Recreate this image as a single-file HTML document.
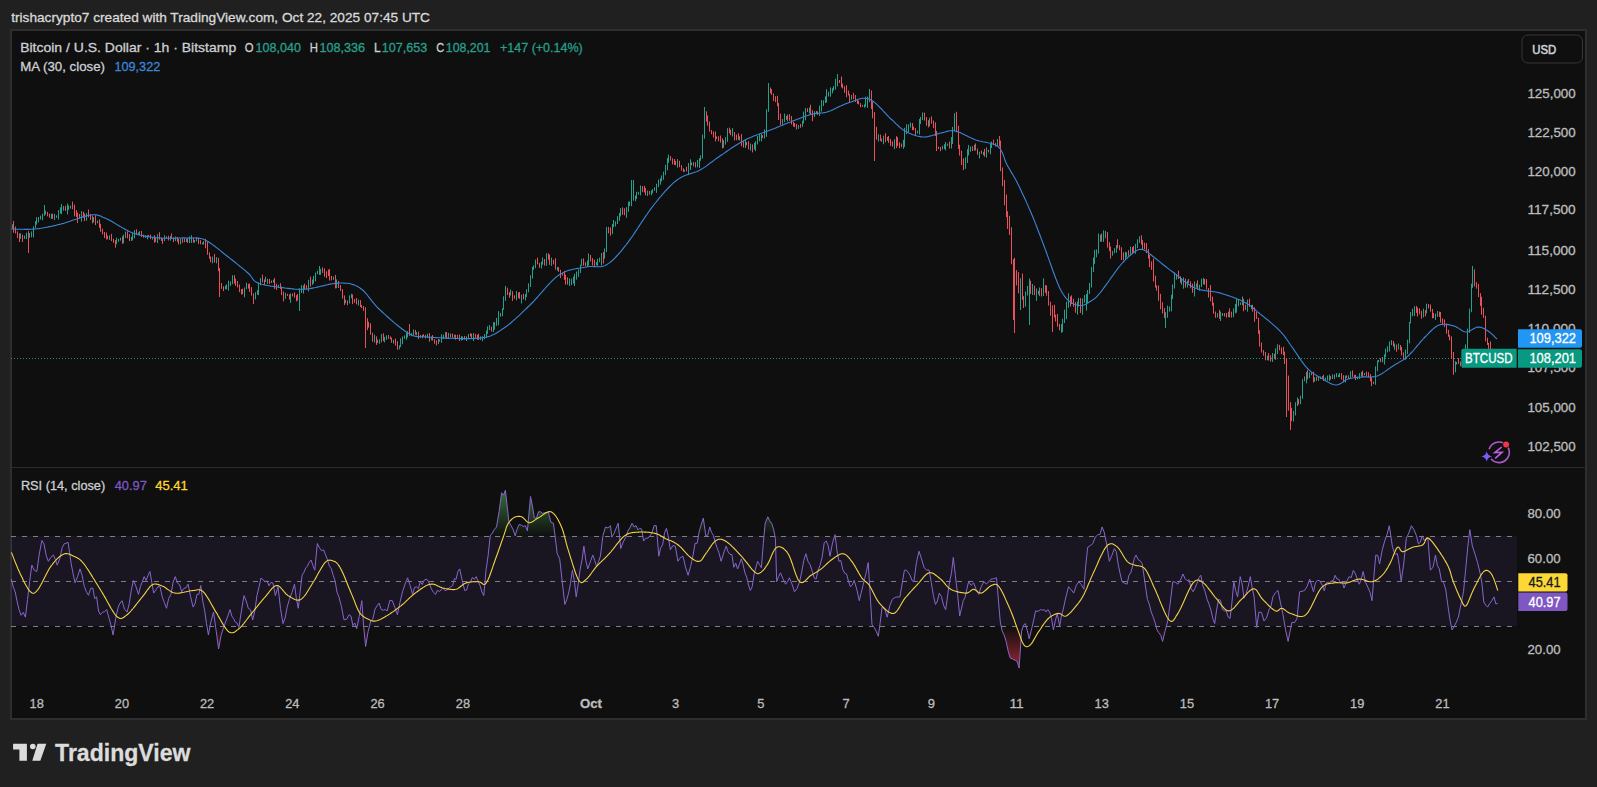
<!DOCTYPE html>
<html><head><meta charset="utf-8"><style>
html,body{margin:0;padding:0;}
body{width:1597px;height:787px;overflow:hidden;background:#202020;position:relative;font-family:"Liberation Sans",sans-serif;}
</style></head><body>
<svg width="1597" height="787" viewBox="0 0 1597 787" style="position:absolute;left:0;top:0"><defs><clipPath id="cp"><rect x="11" y="30" width="1506" height="437"/></clipPath><clipPath id="cr"><rect x="11" y="468" width="1506" height="220"/></clipPath><linearGradient id="gg" gradientUnits="userSpaceOnUse" x1="0" y1="468" x2="0" y2="536.5"><stop offset="0" stop-color="#4caf50" stop-opacity="0.9"/><stop offset="1" stop-color="#4caf50" stop-opacity="0"/></linearGradient><linearGradient id="rg" gradientUnits="userSpaceOnUse" x1="0" y1="626.5" x2="0" y2="694.5"><stop offset="0" stop-color="#f23645" stop-opacity="0"/><stop offset="1" stop-color="#f23645" stop-opacity="1"/></linearGradient></defs><text x="11.2" y="21.9" font-family="Liberation Sans, sans-serif" font-size="13.3" fill="#d9d9d9" stroke="#d9d9d9" stroke-width="0.3" textLength="418.8" lengthAdjust="spacingAndGlyphs">trishacrypto7 created with TradingView.com, Oct 22, 2025 07:45 UTC</text><rect x="10" y="29" width="1577" height="691" fill="#2e2e2e"/><rect x="12" y="31" width="1573" height="687" fill="#0f0f0f"/><rect x="12" y="467" width="1573" height="1" fill="#2b2b2b"/><g clip-path="url(#cp)"><path d="M11,358.5H1517" stroke="#26a08c" stroke-width="1" stroke-dasharray="1,2" opacity="0.9"/><path d="M12.5,224.3V228.7M20.5,233.3V238.8M24.5,235.6V238.7M26.5,232.7V239.1M29.5,233.0V237.9M31.5,231.5V237.3M33.5,226.4V237.4M35.5,221.1V227.9M36.5,217.2V224.6M38.5,217.0V222.4M40.5,215.6V219.5M42.5,213.7V220.2M44.5,205.0V215.9M45.5,210.7V214.5M51.5,213.8V219.0M54.5,214.0V220.0M56.5,215.3V217.7M58.5,210.1V219.5M60.5,207.2V213.5M61.5,204.0V214.2M63.5,206.1V210.6M67.5,203.6V214.4M68.5,205.4V210.0M70.5,205.7V208.6M81.5,211.2V221.7M86.5,213.1V220.7M92.5,215.5V223.3M97.5,220.6V223.3M109.5,235.4V240.0M116.5,237.8V244.2M118.5,238.8V241.9M120.5,237.8V240.6M123.5,234.6V243.4M125.5,231.6V238.0M131.5,236.6V240.8M132.5,232.8V240.4M134.5,230.1V238.4M138.5,232.3V234.6M139.5,231.1V235.4M145.5,235.5V238.0M147.5,235.2V239.3M152.5,237.3V239.3M157.5,234.3V243.1M164.5,235.2V241.2M170.5,236.2V240.6M175.5,236.6V241.1M180.5,238.4V244.3M186.5,238.6V242.1M189.5,236.5V243.1M191.5,235.2V242.8M194.5,240.0V242.6M196.5,237.2V241.5M202.5,242.5V244.4M203.5,241.2V244.5M212.5,256.6V263.3M216.5,257.1V263.3M225.5,285.7V289.2M226.5,284.4V289.4M228.5,280.7V290.6M230.5,281.5V285.9M232.5,275.2V284.2M244.5,287.4V297.3M246.5,282.7V289.1M255.5,292.2V299.4M257.5,290.2V294.2M258.5,282.3V295.2M260.5,278.0V285.3M265.5,276.7V282.0M267.5,278.8V283.8M273.5,279.7V282.6M278.5,284.8V287.8M285.5,292.8V298.9M290.5,293.4V302.9M299.5,288.4V311.0M301.5,285.1V293.0M303.5,285.4V293.6M308.5,279.8V291.5M312.5,279.5V284.9M313.5,275.9V283.6M315.5,272.5V281.4M317.5,270.7V274.2M319.5,266.0V274.9M320.5,268.8V274.8M333.5,276.6V279.9M336.5,279.4V288.2M345.5,299.6V303.3M349.5,295.4V303.5M351.5,293.8V298.2M358.5,299.6V305.6M374.5,334.7V342.5M379.5,339.3V343.8M381.5,334.0V342.4M384.5,336.9V342.4M386.5,335.3V339.9M393.5,339.8V343.6M399.5,345.3V349.3M400.5,338.4V347.0M402.5,336.5V344.2M404.5,335.5V338.7M406.5,332.6V339.8M407.5,331.2V337.5M411.5,332.9V336.3M413.5,329.6V335.5M416.5,332.0V335.2M422.5,335.0V338.4M427.5,333.7V338.0M431.5,336.6V340.3M438.5,339.0V344.1M441.5,334.2V342.8M443.5,334.7V339.0M445.5,332.2V337.5M448.5,332.9V338.9M455.5,334.6V339.8M461.5,336.2V340.6M462.5,336.4V340.1M466.5,336.3V341.0M468.5,334.0V338.5M473.5,333.2V341.0M480.5,336.4V340.0M482.5,336.2V341.2M484.5,334.1V339.2M486.5,330.5V338.0M487.5,326.3V333.8M489.5,325.2V330.0M493.5,322.2V332.0M494.5,322.2V329.6M496.5,317.9V325.9M498.5,311.1V325.3M500.5,312.9V316.7M502.5,308.3V316.3M503.5,296.3V309.8M505.5,285.9V300.9M510.5,289.6V295.5M516.5,291.1V300.4M521.5,294.7V303.4M525.5,294.1V300.5M526.5,289.3V297.0M528.5,283.4V292.3M530.5,275.3V287.0M532.5,266.8V278.6M533.5,265.5V269.8M535.5,259.6V268.2M541.5,261.8V268.5M542.5,257.5V264.7M546.5,253.3V265.8M551.5,257.6V265.9M557.5,267.1V270.5M569.5,278.4V286.1M571.5,278.7V285.2M573.5,276.6V283.6M574.5,273.8V286.0M576.5,271.5V279.6M578.5,269.5V276.9M580.5,264.7V273.1M581.5,258.8V265.8M587.5,260.4V267.0M588.5,253.5V265.4M596.5,262.0V265.4M597.5,258.8V265.9M599.5,257.6V262.1M601.5,253.0V265.5M604.5,248.5V258.7M606.5,227.1V252.1M612.5,224.0V234.1M613.5,220.0V227.1M615.5,221.3V226.5M617.5,216.2V224.1M619.5,212.9V220.9M620.5,208.1V216.5M626.5,207.2V217.8M628.5,201.6V211.8M629.5,201.6V206.0M631.5,180.0V206.1M633.5,180.0V200.7M635.5,195.5V201.2M636.5,191.7V199.0M638.5,191.8V194.3M640.5,185.5V195.4M647.5,190.6V196.0M651.5,190.3V195.3M652.5,189.3V193.3M654.5,187.3V190.8M656.5,183.8V192.9M658.5,179.6V187.1M660.5,178.3V184.8M661.5,175.4V181.4M663.5,171.6V179.8M665.5,164.9V175.2M667.5,158.0V170.4M668.5,154.6V162.8M677.5,159.1V167.6M684.5,169.6V171.4M688.5,163.0V174.8M690.5,159.3V169.9M693.5,162.1V166.4M697.5,159.9V167.3M699.5,158.1V168.0M700.5,155.3V160.8M702.5,134.5V158.6M704.5,107.0V138.8M723.5,140.2V147.8M725.5,137.2V144.6M727.5,128.2V141.9M732.5,128.1V136.5M739.5,136.3V140.5M745.5,139.2V148.0M750.5,143.6V150.6M754.5,142.8V149.6M755.5,141.2V151.2M757.5,136.0V144.4M759.5,134.2V141.4M761.5,134.0V141.4M764.5,129.4V138.5M766.5,109.2V136.9M768.5,83.0V111.8M782.5,119.0V124.7M784.5,113.6V122.2M787.5,114.5V121.4M798.5,125.1V128.9M802.5,120.7V126.8M803.5,111.6V123.4M805.5,108.1V120.3M809.5,107.5V113.4M814.5,111.3V117.1M819.5,105.6V116.0M821.5,100.0V111.6M823.5,100.3V106.1M825.5,96.3V103.1M826.5,89.2V102.4M828.5,91.7V96.5M830.5,87.4V96.7M832.5,88.2V93.3M833.5,86.1V90.6M835.5,78.8V89.6M837.5,74.0V86.4M851.5,95.0V99.8M864.5,104.3V107.7M865.5,96.7V106.7M867.5,96.5V107.9M869.5,88.9V102.2M878.5,134.3V141.6M883.5,135.7V144.2M894.5,139.2V149.2M903.5,139.8V148.8M904.5,127.8V146.9M906.5,124.3V134.1M908.5,124.2V132.4M910.5,122.6V127.5M917.5,130.6V133.4M919.5,118.9V134.5M920.5,116.9V124.1M922.5,112.4V120.0M929.5,117.8V126.3M942.5,145.8V149.4M944.5,144.2V149.1M945.5,142.0V150.4M947.5,143.5V145.8M951.5,137.1V148.4M952.5,127.0V144.0M954.5,113.2V131.1M965.5,157.3V168.9M967.5,149.2V163.0M968.5,145.1V155.4M970.5,146.5V151.8M974.5,144.8V150.7M979.5,151.6V158.4M983.5,151.8V155.3M986.5,147.3V157.7M990.5,143.8V154.3M991.5,141.5V148.0M997.5,139.0V146.0M1020.5,278.2V310.0M1025.5,291.5V306.6M1027.5,285.9V295.5M1029.5,278.5V325.0M1032.5,284.0V295.0M1036.5,288.5V300.9M1039.5,287.5V296.2M1043.5,278.4V296.0M1061.5,324.1V332.8M1062.5,318.8V332.0M1064.5,309.6V323.0M1066.5,301.6V319.2M1068.5,293.3V307.8M1077.5,301.4V314.6M1078.5,297.9V306.5M1082.5,298.5V314.8M1084.5,295.1V302.7M1086.5,294.0V310.6M1087.5,290.1V303.3M1089.5,283.0V294.0M1091.5,267.1V287.5M1093.5,257.7V272.0M1094.5,249.8V263.9M1096.5,249.5V257.3M1098.5,233.5V253.6M1100.5,234.7V241.7M1103.5,230.3V241.9M1105.5,230.9V238.3M1112.5,251.1V255.7M1114.5,248.3V253.3M1116.5,245.0V252.7M1125.5,251.8V259.6M1126.5,252.2V257.3M1130.5,246.7V255.1M1135.5,243.9V253.8M1137.5,239.3V248.2M1139.5,236.3V242.8M1165.5,312.1V328.0M1167.5,305.6V317.8M1169.5,306.5V311.6M1171.5,294.8V311.4M1172.5,284.5V299.0M1174.5,272.4V288.5M1176.5,274.0V279.6M1181.5,278.2V284.8M1183.5,277.4V288.7M1187.5,280.7V287.6M1194.5,281.5V296.5M1196.5,283.5V287.6M1199.5,284.8V290.7M1201.5,278.8V287.1M1203.5,277.9V284.5M1217.5,313.2V317.5M1220.5,311.6V321.0M1222.5,313.0V316.0M1228.5,311.7V317.1M1233.5,308.5V317.2M1235.5,303.9V313.4M1236.5,298.9V312.6M1238.5,300.0V306.4M1240.5,302.4V304.9M1242.5,296.5V305.4M1247.5,299.6V311.7M1251.5,305.0V309.1M1267.5,355.6V360.3M1272.5,353.0V362.0M1275.5,348.4V359.9M1277.5,344.3V354.1M1293.5,410.9V421.5M1295.5,402.3V415.5M1297.5,397.5V406.0M1300.5,395.6V404.2M1302.5,379.2V398.7M1304.5,376.4V381.2M1306.5,371.9V383.4M1309.5,372.3V378.2M1311.5,372.6V375.2M1314.5,377.2V381.7M1318.5,376.3V380.9M1320.5,376.5V379.1M1322.5,376.1V378.8M1325.5,377.6V380.8M1327.5,375.5V380.5M1329.5,374.6V380.9M1332.5,374.5V379.1M1334.5,374.3V379.2M1336.5,373.0V377.3M1338.5,374.5V377.2M1339.5,373.0V377.1M1345.5,375.6V382.5M1348.5,375.3V378.8M1350.5,371.2V378.3M1357.5,376.7V379.4M1359.5,373.2V379.0M1361.5,372.0V376.5M1364.5,373.0V375.3M1375.5,366.4V384.8M1377.5,360.4V371.3M1378.5,359.9V362.2M1382.5,357.0V362.4M1384.5,354.4V364.5M1385.5,348.6V357.3M1387.5,346.3V352.2M1389.5,341.3V351.5M1391.5,340.1V345.1M1394.5,343.5V349.8M1398.5,343.5V349.5M1405.5,349.5V359.8M1407.5,339.7V354.1M1409.5,322.0V343.3M1410.5,312.1V323.4M1412.5,308.7V316.3M1414.5,306.3V316.0M1423.5,308.6V317.4M1426.5,303.7V313.4M1435.5,313.6V319.9M1437.5,311.0V316.8M1455.5,361.2V372.3M1456.5,362.0V364.5M1462.5,360.0V367.7M1464.5,351.3V366.7M1465.5,344.4V358.9M1467.5,328.6V350.8M1469.5,308.6V332.8M1471.5,283.7V312.2M1472.5,266.0V287.8M1497.5,355.3V364.6" stroke="#26a08c" stroke-width="1" fill="none"/><path d="M13.5,220.9V232.8M15.5,226.5V233.5M17.5,231.4V238.0M19.5,233.4V242.0M22.5,234.6V242.0M28.5,231.1V253.0M47.5,211.9V216.3M49.5,213.6V217.8M52.5,213.7V218.8M65.5,205.8V210.9M72.5,201.6V209.2M74.5,204.7V216.4M76.5,210.2V217.0M77.5,212.6V223.0M79.5,213.9V218.6M83.5,211.6V217.7M84.5,213.6V221.1M88.5,209.6V217.3M90.5,213.9V219.9M93.5,217.0V222.4M95.5,215.3V225.1M99.5,219.4V227.9M100.5,223.8V231.8M102.5,228.7V234.3M104.5,231.9V238.1M106.5,232.5V239.5M107.5,235.7V239.2M111.5,233.8V241.1M113.5,238.8V242.8M115.5,240.1V247.7M122.5,236.3V243.7M127.5,231.3V238.4M129.5,234.1V241.1M136.5,229.3V234.7M141.5,230.9V236.9M143.5,234.6V237.6M148.5,235.0V236.9M150.5,234.5V239.1M154.5,235.1V242.7M155.5,237.8V241.9M159.5,232.2V239.6M161.5,237.7V241.0M162.5,238.8V243.9M166.5,236.4V238.4M168.5,235.7V240.5M171.5,233.4V238.7M173.5,237.4V242.1M177.5,237.0V241.8M178.5,238.9V244.4M182.5,238.4V242.8M184.5,238.4V242.2M187.5,238.3V242.9M193.5,237.7V242.6M198.5,237.6V243.9M200.5,240.2V244.3M205.5,238.8V248.3M207.5,241.8V254.7M209.5,252.4V258.7M210.5,256.5V262.2M214.5,253.9V262.6M218.5,257.8V271.2M219.5,268.0V297.0M221.5,283.0V288.9M223.5,286.3V291.1M234.5,275.2V283.6M235.5,278.7V285.8M237.5,281.0V287.4M239.5,284.5V292.2M241.5,289.1V294.5M242.5,288.8V294.2M248.5,283.9V288.6M249.5,283.5V291.9M251.5,287.1V295.6M253.5,293.4V304.0M262.5,274.6V282.3M264.5,279.4V284.9M269.5,278.8V283.9M271.5,280.6V283.0M274.5,278.0V288.9M276.5,283.7V289.9M280.5,283.2V288.9M281.5,286.6V295.1M283.5,291.5V301.4M287.5,293.9V295.7M289.5,294.4V299.5M292.5,293.5V296.4M294.5,292.3V297.7M296.5,295.2V301.4M297.5,294.0V300.6M304.5,283.7V289.0M306.5,285.2V289.5M310.5,276.6V286.6M322.5,267.4V272.9M324.5,268.4V276.8M326.5,271.2V278.1M328.5,269.6V276.0M329.5,269.2V280.5M331.5,276.0V280.4M335.5,274.9V288.4M338.5,280.8V288.0M340.5,285.1V290.9M342.5,289.3V298.7M344.5,295.4V305.0M347.5,300.5V305.3M352.5,294.4V304.1M354.5,298.9V302.6M356.5,298.0V304.4M360.5,300.1V306.9M361.5,305.0V308.1M363.5,306.0V310.8M365.5,307.4V348.0M367.5,318.2V330.1M368.5,321.8V327.6M370.5,323.3V334.7M372.5,332.7V341.7M376.5,336.3V344.9M377.5,339.6V343.1M383.5,333.3V341.1M388.5,335.0V338.9M390.5,336.4V339.3M391.5,337.6V342.7M395.5,338.6V345.6M397.5,341.2V349.8M409.5,324.0V335.8M415.5,329.9V334.8M418.5,331.6V339.1M420.5,334.8V337.8M423.5,334.1V336.4M425.5,334.8V338.5M429.5,333.1V341.7M432.5,335.1V340.6M434.5,339.1V343.7M436.5,340.4V345.4M439.5,339.5V341.5M446.5,332.0V339.1M450.5,333.6V337.5M452.5,333.5V337.8M454.5,334.8V337.4M457.5,334.8V339.0M459.5,334.5V341.1M464.5,335.9V339.7M470.5,333.3V336.4M471.5,333.7V339.1M475.5,333.9V337.8M477.5,334.7V339.8M478.5,333.7V339.9M491.5,326.6V331.5M507.5,287.7V295.0M509.5,292.2V297.8M512.5,291.2V300.9M514.5,295.3V298.7M518.5,292.4V298.2M519.5,292.0V298.8M523.5,293.7V299.4M537.5,257.6V264.4M539.5,263.0V267.8M544.5,259.0V265.7M548.5,253.3V259.7M549.5,254.5V264.9M553.5,259.8V264.4M555.5,258.2V269.6M558.5,267.1V271.8M560.5,269.8V278.1M562.5,273.0V275.6M564.5,270.8V279.8M565.5,274.7V284.6M567.5,277.3V284.6M583.5,258.4V265.7M585.5,262.2V266.1M590.5,254.9V261.5M592.5,258.1V265.5M594.5,259.7V266.7M603.5,252.1V263.5M608.5,226.9V233.4M610.5,227.5V235.8M622.5,207.4V214.8M624.5,208.3V215.1M642.5,186.0V192.1M644.5,185.8V192.5M645.5,188.0V195.3M649.5,190.9V194.6M670.5,156.1V160.5M672.5,158.3V164.4M674.5,159.0V164.9M675.5,160.9V165.2M679.5,160.8V167.2M681.5,165.2V170.7M683.5,168.3V172.2M686.5,166.8V171.3M691.5,162.4V165.2M695.5,162.2V167.5M706.5,111.3V121.8M707.5,115.5V125.7M709.5,121.5V131.6M711.5,130.0V134.3M713.5,131.4V137.5M715.5,131.5V141.5M716.5,136.4V139.1M718.5,136.3V141.3M720.5,135.5V142.6M722.5,138.3V148.4M729.5,127.6V133.3M730.5,129.6V135.2M734.5,132.0V140.5M736.5,134.6V140.3M738.5,133.2V140.0M741.5,134.0V146.2M743.5,141.2V147.6M746.5,142.1V145.3M748.5,141.2V149.4M752.5,144.3V152.4M762.5,135.2V138.0M770.5,87.5V93.3M771.5,89.1V94.9M773.5,93.5V101.1M775.5,96.2V102.0M777.5,95.8V106.2M778.5,103.1V120.0M780.5,113.8V125.1M786.5,115.8V119.8M789.5,114.1V120.9M791.5,116.0V124.5M793.5,121.8V126.6M794.5,123.1V127.1M796.5,123.8V129.5M800.5,123.9V127.8M807.5,108.2V112.0M810.5,104.7V114.4M812.5,110.2V121.2M816.5,110.9V114.2M817.5,111.5V114.9M839.5,80.0V83.0M841.5,76.5V87.4M842.5,83.6V88.5M844.5,86.3V92.8M846.5,85.2V97.3M848.5,90.6V95.4M849.5,93.9V103.0M853.5,92.9V99.2M855.5,95.0V102.0M857.5,99.9V103.9M858.5,100.7V104.5M860.5,103.2V107.3M862.5,105.0V106.6M871.5,90.5V109.1M872.5,101.4V118.3M874.5,112.1V161.0M876.5,126.8V139.7M880.5,134.6V140.8M881.5,138.6V141.9M885.5,133.2V142.3M887.5,136.9V140.8M888.5,136.0V142.9M890.5,138.9V145.9M892.5,141.4V146.7M896.5,136.1V148.1M897.5,137.2V146.0M899.5,142.2V148.2M901.5,143.5V147.3M912.5,123.0V130.2M913.5,126.6V130.0M915.5,128.1V135.5M924.5,112.6V120.6M926.5,117.1V125.7M928.5,120.2V127.4M931.5,116.5V123.7M933.5,120.5V128.2M935.5,122.4V136.0M936.5,131.0V151.1M938.5,146.7V149.1M940.5,146.9V151.2M949.5,141.5V148.5M956.5,111.8V132.3M958.5,125.7V148.8M959.5,144.7V155.6M961.5,150.6V165.0M963.5,158.4V170.0M972.5,146.3V150.8M975.5,143.5V150.5M977.5,148.6V154.7M981.5,150.5V153.9M984.5,148.9V156.6M988.5,149.8V152.4M993.5,139.7V144.4M995.5,143.1V146.5M999.5,135.9V146.4M1000.5,140.5V171.2M1002.5,167.4V186.2M1004.5,179.9V205.3M1006.5,194.5V217.2M1007.5,211.2V228.9M1009.5,215.8V235.0M1011.5,227.2V264.3M1013.5,259.2V320.0M1014.5,257.8V333.0M1016.5,270.1V285.5M1018.5,272.1V293.3M1022.5,273.5V299.8M1023.5,296.2V308.0M1030.5,280.7V293.9M1034.5,285.7V295.2M1038.5,290.8V294.4M1041.5,288.1V296.5M1045.5,285.1V292.8M1046.5,285.4V295.7M1048.5,291.0V305.6M1050.5,301.7V315.7M1052.5,305.4V332.0M1054.5,304.7V317.5M1055.5,314.7V321.5M1057.5,314.0V326.7M1059.5,323.8V330.4M1070.5,296.5V306.6M1071.5,295.3V304.1M1073.5,298.8V306.8M1075.5,302.1V312.8M1080.5,298.1V312.9M1101.5,233.6V241.7M1107.5,232.0V247.6M1109.5,242.2V251.2M1110.5,246.5V258.7M1117.5,239.2V248.4M1119.5,245.1V250.3M1121.5,247.2V260.0M1123.5,252.4V260.2M1128.5,250.2V255.7M1132.5,247.2V254.2M1133.5,246.0V252.0M1141.5,235.3V244.6M1142.5,240.1V249.1M1144.5,242.7V249.3M1146.5,243.1V253.1M1148.5,249.0V258.5M1149.5,254.9V267.1M1151.5,261.3V269.9M1153.5,258.6V281.5M1155.5,275.6V287.6M1156.5,285.4V290.7M1158.5,285.5V300.8M1160.5,293.8V309.2M1162.5,302.2V313.6M1164.5,308.1V318.1M1178.5,270.6V279.0M1180.5,276.2V282.7M1185.5,278.6V287.6M1188.5,279.0V283.0M1190.5,281.3V288.3M1192.5,283.7V292.8M1197.5,280.3V289.5M1204.5,278.9V284.6M1206.5,279.1V289.5M1208.5,288.1V297.6M1210.5,285.1V301.4M1212.5,296.6V305.8M1213.5,302.7V313.7M1215.5,311.6V317.8M1219.5,309.9V318.8M1224.5,313.1V316.5M1226.5,312.9V317.6M1229.5,308.4V317.5M1231.5,311.6V317.5M1243.5,298.8V311.3M1245.5,304.7V309.9M1249.5,298.6V306.9M1252.5,304.8V311.7M1254.5,307.3V321.8M1256.5,312.0V319.0M1258.5,317.6V333.8M1259.5,330.3V346.6M1261.5,342.5V352.6M1263.5,350.1V355.7M1265.5,352.0V360.3M1268.5,353.1V360.5M1270.5,355.3V361.6M1274.5,353.7V358.5M1279.5,344.9V350.3M1281.5,347.4V354.2M1283.5,346.8V355.1M1284.5,351.6V364.0M1286.5,358.4V417.0M1288.5,375.6V410.7M1290.5,402.1V430.0M1291.5,407.8V421.1M1298.5,399.1V404.5M1307.5,370.2V379.4M1313.5,371.7V382.5M1316.5,376.6V380.8M1323.5,374.8V381.0M1330.5,376.1V379.6M1341.5,373.1V379.6M1343.5,375.2V382.3M1346.5,375.4V378.0M1352.5,370.4V376.9M1354.5,374.9V377.7M1355.5,374.8V380.0M1362.5,370.6V377.2M1366.5,371.7V376.1M1368.5,372.2V377.6M1370.5,374.1V381.3M1371.5,377.6V386.2M1373.5,381.6V383.9M1380.5,358.2V361.8M1393.5,341.1V346.7M1396.5,344.5V351.7M1400.5,345.0V350.4M1401.5,347.0V355.4M1403.5,352.4V359.4M1416.5,305.9V312.9M1417.5,307.6V316.6M1419.5,308.4V314.4M1421.5,310.7V318.8M1425.5,310.2V316.4M1428.5,304.1V308.4M1430.5,304.5V311.7M1432.5,308.9V318.4M1433.5,313.0V318.0M1439.5,311.6V316.9M1440.5,312.0V322.7M1442.5,318.4V325.2M1444.5,319.4V327.1M1446.5,323.6V333.8M1448.5,329.8V336.7M1449.5,334.8V340.3M1451.5,336.3V358.4M1453.5,352.0V374.8M1458.5,358.1V364.1M1460.5,361.4V366.2M1474.5,269.4V286.5M1476.5,282.2V288.6M1478.5,283.9V297.1M1480.5,293.2V305.9M1481.5,296.8V314.8M1483.5,307.8V317.9M1485.5,315.7V341.4M1487.5,337.8V344.9M1488.5,342.9V349.7M1490.5,341.5V352.4M1492.5,348.6V353.2M1494.5,350.4V357.4M1496.5,355.7V360.8" stroke="#e8505c" stroke-width="1" fill="none"/><path d="M12.0,226.3h1V227.3h-1zM20.0,237.5h1V238.5h-1zM24.0,237.7h1V238.7h-1zM26.0,234.2h1V237.7h-1zM29.0,235.2h1V236.6h-1zM31.0,233.5h1V235.2h-1zM33.0,227.1h1V233.5h-1zM35.0,222.5h1V227.1h-1zM36.0,220.0h1V222.5h-1zM38.0,217.9h1V220.0h-1zM40.0,217.0h1V218.0h-1zM42.0,214.3h1V217.0h-1zM44.0,213.8h1V214.8h-1zM45.0,212.9h1V213.9h-1zM51.0,215.0h1V216.1h-1zM54.0,216.5h1V217.9h-1zM56.0,216.4h1V217.4h-1zM58.0,212.2h1V216.4h-1zM60.0,209.0h1V212.2h-1zM61.0,207.7h1V209.0h-1zM63.0,207.6h1V208.6h-1zM67.0,208.5h1V209.5h-1zM68.0,206.8h1V208.5h-1zM70.0,206.4h1V207.4h-1zM81.0,214.5h1V217.8h-1zM86.0,214.6h1V218.9h-1zM92.0,217.8h1V218.8h-1zM97.0,221.7h1V222.7h-1zM109.0,236.3h1V237.5h-1zM116.0,240.8h1V243.0h-1zM118.0,239.3h1V240.8h-1zM120.0,238.8h1V239.8h-1zM123.0,236.3h1V241.7h-1zM125.0,234.4h1V236.3h-1zM131.0,239.8h1V240.8h-1zM132.0,234.7h1V239.8h-1zM134.0,230.9h1V234.7h-1zM138.0,233.6h1V234.6h-1zM139.0,232.8h1V233.8h-1zM145.0,236.3h1V237.3h-1zM147.0,236.0h1V237.0h-1zM152.0,238.5h1V239.5h-1zM157.0,236.2h1V238.8h-1zM164.0,236.9h1V240.2h-1zM170.0,237.0h1V239.4h-1zM175.0,238.3h1V240.5h-1zM180.0,240.1h1V241.2h-1zM186.0,240.0h1V241.0h-1zM189.0,239.6h1V241.2h-1zM191.0,239.1h1V240.1h-1zM194.0,240.8h1V241.8h-1zM196.0,239.6h1V240.8h-1zM202.0,243.0h1V244.0h-1zM203.0,242.1h1V243.1h-1zM212.0,258.6h1V261.4h-1zM216.0,258.6h1V261.8h-1zM225.0,287.3h1V288.3h-1zM226.0,286.6h1V287.6h-1zM228.0,284.3h1V286.6h-1zM230.0,282.1h1V284.3h-1zM232.0,278.1h1V282.1h-1zM244.0,287.9h1V292.5h-1zM246.0,285.6h1V287.9h-1zM255.0,293.6h1V296.3h-1zM257.0,293.6h1V294.6h-1zM258.0,283.2h1V293.6h-1zM260.0,279.1h1V283.2h-1zM265.0,281.1h1V282.1h-1zM267.0,279.4h1V281.1h-1zM273.0,280.3h1V281.6h-1zM278.0,285.7h1V286.7h-1zM285.0,294.7h1V298.1h-1zM290.0,294.0h1V297.5h-1zM299.0,291.7h1V297.9h-1zM301.0,289.4h1V291.7h-1zM303.0,287.1h1V289.4h-1zM308.0,281.0h1V288.3h-1zM312.0,280.3h1V284.1h-1zM313.0,280.0h1V281.0h-1zM315.0,273.6h1V280.0h-1zM317.0,271.8h1V273.6h-1zM319.0,271.2h1V272.2h-1zM320.0,270.3h1V271.3h-1zM333.0,277.5h1V279.0h-1zM336.0,282.4h1V284.9h-1zM345.0,301.7h1V302.7h-1zM349.0,297.1h1V301.7h-1zM351.0,296.6h1V297.6h-1zM358.0,301.9h1V302.9h-1zM374.0,337.1h1V339.3h-1zM379.0,340.4h1V341.5h-1zM381.0,336.3h1V340.4h-1zM384.0,338.3h1V339.3h-1zM386.0,336.8h1V338.3h-1zM393.0,340.6h1V342.0h-1zM399.0,346.0h1V347.1h-1zM400.0,341.5h1V346.0h-1zM402.0,337.1h1V341.5h-1zM404.0,336.8h1V337.8h-1zM406.0,334.8h1V336.8h-1zM407.0,333.0h1V334.8h-1zM411.0,333.7h1V334.7h-1zM413.0,331.3h1V333.7h-1zM416.0,332.9h1V333.9h-1zM422.0,335.5h1V336.6h-1zM427.0,336.6h1V337.6h-1zM431.0,338.3h1V339.3h-1zM438.0,340.3h1V342.9h-1zM441.0,336.8h1V340.8h-1zM443.0,335.8h1V336.8h-1zM445.0,333.8h1V335.8h-1zM448.0,335.4h1V337.0h-1zM455.0,335.6h1V336.6h-1zM461.0,337.7h1V338.9h-1zM462.0,337.7h1V338.7h-1zM466.0,337.2h1V338.3h-1zM468.0,335.2h1V337.2h-1zM473.0,335.2h1V337.6h-1zM480.0,338.6h1V339.6h-1zM482.0,338.1h1V339.1h-1zM484.0,336.3h1V338.1h-1zM486.0,332.6h1V336.3h-1zM487.0,329.3h1V332.6h-1zM489.0,328.1h1V329.3h-1zM493.0,326.4h1V329.2h-1zM494.0,323.4h1V326.4h-1zM496.0,320.9h1V323.4h-1zM498.0,315.6h1V320.9h-1zM500.0,313.8h1V315.6h-1zM502.0,309.1h1V313.8h-1zM503.0,298.9h1V309.1h-1zM505.0,289.1h1V298.9h-1zM510.0,292.4h1V294.1h-1zM516.0,294.0h1V297.4h-1zM521.0,296.0h1V297.8h-1zM525.0,296.2h1V297.2h-1zM526.0,291.5h1V296.2h-1zM528.0,284.9h1V291.5h-1zM530.0,276.8h1V284.9h-1zM532.0,268.2h1V276.8h-1zM533.0,267.1h1V268.2h-1zM535.0,261.3h1V267.1h-1zM541.0,263.0h1V265.9h-1zM542.0,260.6h1V263.0h-1zM546.0,257.4h1V263.6h-1zM551.0,260.5h1V262.4h-1zM557.0,268.5h1V269.5h-1zM569.0,281.0h1V282.0h-1zM571.0,280.1h1V281.1h-1zM573.0,278.0h1V280.1h-1zM574.0,277.5h1V278.5h-1zM576.0,275.9h1V277.5h-1zM578.0,271.5h1V275.9h-1zM580.0,265.3h1V271.5h-1zM581.0,260.0h1V265.3h-1zM587.0,264.7h1V265.7h-1zM588.0,257.9h1V264.7h-1zM596.0,263.3h1V264.8h-1zM597.0,261.1h1V263.3h-1zM599.0,260.8h1V261.8h-1zM601.0,255.4h1V260.8h-1zM604.0,251.3h1V258.0h-1zM606.0,228.0h1V251.3h-1zM612.0,226.1h1V231.9h-1zM613.0,223.9h1V226.1h-1zM615.0,222.4h1V223.9h-1zM617.0,219.0h1V222.4h-1zM619.0,214.2h1V219.0h-1zM620.0,209.5h1V214.2h-1zM626.0,209.7h1V214.4h-1zM628.0,203.0h1V209.7h-1zM629.0,203.0h1V204.0h-1zM631.0,199.4h1V203.0h-1zM633.0,199.1h1V200.1h-1zM635.0,197.9h1V199.1h-1zM636.0,193.8h1V197.9h-1zM638.0,193.6h1V194.6h-1zM640.0,188.4h1V193.6h-1zM647.0,192.0h1V193.0h-1zM651.0,191.9h1V192.9h-1zM652.0,189.8h1V191.9h-1zM654.0,188.0h1V189.8h-1zM656.0,185.0h1V188.0h-1zM658.0,181.2h1V185.0h-1zM660.0,180.3h1V181.3h-1zM661.0,177.3h1V180.3h-1zM663.0,172.7h1V177.3h-1zM665.0,166.3h1V172.7h-1zM667.0,161.5h1V166.3h-1zM668.0,157.6h1V161.5h-1zM677.0,163.6h1V164.6h-1zM684.0,170.3h1V171.3h-1zM688.0,167.3h1V170.7h-1zM690.0,163.2h1V167.3h-1zM693.0,162.9h1V164.4h-1zM697.0,163.7h1V165.7h-1zM699.0,159.5h1V163.7h-1zM700.0,155.9h1V159.5h-1zM702.0,137.2h1V155.9h-1zM704.0,112.0h1V137.2h-1zM723.0,142.6h1V145.1h-1zM725.0,139.1h1V142.6h-1zM727.0,131.4h1V139.1h-1zM732.0,133.6h1V134.6h-1zM739.0,138.2h1V139.2h-1zM745.0,143.2h1V145.0h-1zM750.0,146.5h1V148.9h-1zM754.0,146.9h1V148.1h-1zM755.0,143.2h1V146.9h-1zM757.0,137.9h1V143.2h-1zM759.0,136.8h1V137.9h-1zM761.0,136.2h1V137.2h-1zM764.0,133.3h1V136.8h-1zM766.0,110.7h1V133.3h-1zM768.0,90.3h1V110.7h-1zM782.0,121.3h1V122.6h-1zM784.0,116.8h1V121.3h-1zM787.0,116.3h1V118.1h-1zM798.0,125.9h1V127.3h-1zM802.0,121.6h1V126.3h-1zM803.0,118.0h1V121.6h-1zM805.0,110.1h1V118.0h-1zM809.0,108.4h1V110.8h-1zM814.0,111.8h1V116.0h-1zM819.0,109.9h1V114.0h-1zM821.0,105.2h1V109.9h-1zM823.0,101.4h1V105.2h-1zM825.0,98.5h1V101.4h-1zM826.0,93.4h1V98.5h-1zM828.0,92.4h1V93.4h-1zM830.0,91.0h1V92.4h-1zM832.0,89.7h1V91.0h-1zM833.0,87.7h1V89.7h-1zM835.0,85.3h1V87.7h-1zM837.0,80.5h1V85.3h-1zM851.0,96.2h1V97.8h-1zM864.0,105.1h1V106.1h-1zM865.0,102.2h1V105.1h-1zM867.0,98.0h1V102.2h-1zM869.0,92.7h1V98.0h-1zM878.0,136.1h1V138.5h-1zM883.0,136.9h1V140.5h-1zM894.0,142.1h1V143.6h-1zM903.0,140.4h1V146.5h-1zM904.0,133.6h1V140.4h-1zM906.0,130.7h1V133.6h-1zM908.0,126.4h1V130.7h-1zM910.0,123.9h1V126.4h-1zM917.0,131.2h1V132.8h-1zM919.0,121.0h1V131.2h-1zM920.0,118.5h1V121.0h-1zM922.0,114.4h1V118.5h-1zM929.0,119.3h1V125.2h-1zM942.0,146.5h1V148.1h-1zM944.0,145.6h1V146.6h-1zM945.0,145.3h1V146.3h-1zM947.0,144.5h1V145.5h-1zM951.0,139.0h1V146.4h-1zM952.0,129.4h1V139.0h-1zM954.0,114.7h1V129.4h-1zM965.0,159.5h1V164.7h-1zM967.0,152.9h1V159.5h-1zM968.0,150.5h1V152.9h-1zM970.0,150.0h1V151.0h-1zM974.0,145.8h1V150.1h-1zM979.0,152.2h1V153.2h-1zM983.0,152.9h1V153.9h-1zM986.0,150.7h1V155.8h-1zM990.0,147.1h1V150.7h-1zM991.0,143.3h1V147.1h-1zM997.0,140.7h1V144.7h-1zM1020.0,283.6h1V285.1h-1zM1025.0,294.7h1V303.1h-1zM1027.0,288.0h1V294.7h-1zM1029.0,283.5h1V288.0h-1zM1032.0,291.6h1V293.1h-1zM1036.0,292.1h1V293.1h-1zM1039.0,290.1h1V293.2h-1zM1043.0,287.8h1V293.1h-1zM1061.0,325.6h1V328.4h-1zM1062.0,320.0h1V325.6h-1zM1064.0,314.3h1V320.0h-1zM1066.0,304.9h1V314.3h-1zM1068.0,298.8h1V304.9h-1zM1077.0,302.7h1V309.7h-1zM1078.0,302.1h1V303.1h-1zM1082.0,300.7h1V312.2h-1zM1084.0,299.6h1V300.7h-1zM1086.0,296.8h1V299.6h-1zM1087.0,292.4h1V296.8h-1zM1089.0,284.2h1V292.4h-1zM1091.0,270.2h1V284.2h-1zM1093.0,261.4h1V270.2h-1zM1094.0,255.4h1V261.4h-1zM1096.0,251.8h1V255.4h-1zM1098.0,239.0h1V251.8h-1zM1100.0,236.8h1V239.0h-1zM1103.0,234.8h1V237.7h-1zM1105.0,232.8h1V234.8h-1zM1112.0,252.7h1V254.6h-1zM1114.0,249.0h1V252.7h-1zM1116.0,245.9h1V249.0h-1zM1125.0,254.9h1V258.3h-1zM1126.0,253.1h1V254.9h-1zM1130.0,248.7h1V253.2h-1zM1135.0,245.2h1V251.5h-1zM1137.0,241.7h1V245.2h-1zM1139.0,237.7h1V241.7h-1zM1165.0,315.1h1V316.2h-1zM1167.0,310.5h1V315.1h-1zM1169.0,309.7h1V310.7h-1zM1171.0,298.5h1V309.7h-1zM1172.0,287.2h1V298.5h-1zM1174.0,277.3h1V287.2h-1zM1176.0,275.5h1V277.3h-1zM1181.0,281.6h1V282.6h-1zM1183.0,281.0h1V282.0h-1zM1187.0,282.3h1V285.5h-1zM1194.0,286.6h1V289.9h-1zM1196.0,284.4h1V286.6h-1zM1199.0,286.6h1V287.6h-1zM1201.0,281.4h1V286.6h-1zM1203.0,280.2h1V281.4h-1zM1217.0,314.8h1V316.2h-1zM1220.0,315.4h1V317.7h-1zM1222.0,313.9h1V315.4h-1zM1228.0,313.1h1V314.9h-1zM1233.0,311.2h1V315.9h-1zM1235.0,309.1h1V311.2h-1zM1236.0,304.7h1V309.1h-1zM1238.0,303.6h1V304.7h-1zM1240.0,302.9h1V303.9h-1zM1242.0,301.3h1V302.9h-1zM1247.0,305.0h1V307.5h-1zM1251.0,305.6h1V306.6h-1zM1267.0,356.8h1V359.3h-1zM1272.0,354.2h1V359.7h-1zM1275.0,350.2h1V357.3h-1zM1277.0,347.2h1V350.2h-1zM1293.0,412.9h1V420.6h-1zM1295.0,403.4h1V412.9h-1zM1297.0,400.9h1V403.4h-1zM1300.0,397.4h1V402.7h-1zM1302.0,380.5h1V397.4h-1zM1304.0,379.5h1V380.5h-1zM1306.0,372.9h1V379.5h-1zM1309.0,374.2h1V377.0h-1zM1311.0,373.7h1V374.7h-1zM1314.0,378.8h1V379.8h-1zM1318.0,378.0h1V379.0h-1zM1320.0,377.2h1V378.2h-1zM1322.0,377.1h1V378.1h-1zM1325.0,378.5h1V379.5h-1zM1327.0,378.3h1V379.3h-1zM1329.0,377.5h1V378.5h-1zM1332.0,377.4h1V378.4h-1zM1334.0,375.6h1V377.4h-1zM1336.0,375.5h1V376.5h-1zM1338.0,375.4h1V376.4h-1zM1339.0,374.3h1V375.4h-1zM1345.0,376.4h1V379.5h-1zM1348.0,376.3h1V377.4h-1zM1350.0,372.2h1V376.3h-1zM1357.0,377.5h1V378.5h-1zM1359.0,375.9h1V377.5h-1zM1361.0,372.5h1V375.9h-1zM1364.0,373.6h1V374.6h-1zM1375.0,367.5h1V382.7h-1zM1377.0,360.9h1V367.5h-1zM1378.0,360.6h1V361.6h-1zM1382.0,360.2h1V361.2h-1zM1384.0,355.2h1V360.2h-1zM1385.0,350.6h1V355.2h-1zM1387.0,349.9h1V350.9h-1zM1389.0,344.1h1V349.9h-1zM1391.0,341.7h1V344.1h-1zM1394.0,345.2h1V346.2h-1zM1398.0,347.1h1V348.4h-1zM1405.0,350.4h1V358.2h-1zM1407.0,341.1h1V350.4h-1zM1409.0,322.6h1V341.1h-1zM1410.0,315.0h1V322.6h-1zM1412.0,311.1h1V315.0h-1zM1414.0,308.2h1V311.1h-1zM1423.0,311.1h1V315.4h-1zM1426.0,305.6h1V311.6h-1zM1435.0,315.3h1V317.1h-1zM1437.0,312.4h1V315.3h-1zM1455.0,362.7h1V370.4h-1zM1456.0,362.6h1V363.6h-1zM1462.0,361.8h1V364.1h-1zM1464.0,354.8h1V361.8h-1zM1465.0,346.9h1V354.8h-1zM1467.0,331.0h1V346.9h-1zM1469.0,309.8h1V331.0h-1zM1471.0,285.1h1V309.8h-1zM1472.0,272.9h1V285.1h-1zM1497.0,358.3h1V360.2h-1z" fill="#26a08c"/><path d="M13.0,226.3h1V228.5h-1zM15.0,228.5h1V233.0h-1zM17.0,233.0h1V234.8h-1zM19.0,234.8h1V237.7h-1zM22.0,237.5h1V238.5h-1zM28.0,234.2h1V236.6h-1zM47.0,212.9h1V214.6h-1zM49.0,214.6h1V216.1h-1zM52.0,215.0h1V217.9h-1zM65.0,207.6h1V208.8h-1zM72.0,206.4h1V208.5h-1zM74.0,208.5h1V214.2h-1zM76.0,214.2h1V215.2h-1zM77.0,214.2h1V217.0h-1zM79.0,217.0h1V218.0h-1zM83.0,214.5h1V215.7h-1zM84.0,215.7h1V218.9h-1zM88.0,214.6h1V216.2h-1zM90.0,216.2h1V217.9h-1zM93.0,217.8h1V220.9h-1zM95.0,220.9h1V222.7h-1zM99.0,221.7h1V226.5h-1zM100.0,226.5h1V229.7h-1zM102.0,229.7h1V232.8h-1zM104.0,232.8h1V236.2h-1zM106.0,236.2h1V237.2h-1zM107.0,236.8h1V237.8h-1zM111.0,236.3h1V240.4h-1zM113.0,240.4h1V241.4h-1zM115.0,241.2h1V243.0h-1zM122.0,238.8h1V241.7h-1zM127.0,234.4h1V236.6h-1zM129.0,236.6h1V239.9h-1zM136.0,230.9h1V233.9h-1zM141.0,232.8h1V235.5h-1zM143.0,235.5h1V237.0h-1zM148.0,236.0h1V237.0h-1zM150.0,236.4h1V238.6h-1zM154.0,238.5h1V239.5h-1zM155.0,238.6h1V239.6h-1zM159.0,236.2h1V238.9h-1zM161.0,238.9h1V240.1h-1zM162.0,240.1h1V241.1h-1zM166.0,236.9h1V237.9h-1zM168.0,237.1h1V239.4h-1zM171.0,237.0h1V238.1h-1zM173.0,238.1h1V240.5h-1zM177.0,238.3h1V241.1h-1zM178.0,241.1h1V242.1h-1zM182.0,240.1h1V241.1h-1zM184.0,240.2h1V241.2h-1zM187.0,240.0h1V241.2h-1zM193.0,239.1h1V241.1h-1zM198.0,239.6h1V241.6h-1zM200.0,241.6h1V243.5h-1zM205.0,242.1h1V244.4h-1zM207.0,244.4h1V252.9h-1zM209.0,252.9h1V258.1h-1zM210.0,258.1h1V261.4h-1zM214.0,258.6h1V261.8h-1zM218.0,258.6h1V270.4h-1zM219.0,270.4h1V285.0h-1zM221.0,285.0h1V287.2h-1zM223.0,287.2h1V288.2h-1zM234.0,278.1h1V280.5h-1zM235.0,280.5h1V284.4h-1zM237.0,284.4h1V286.7h-1zM239.0,286.7h1V291.0h-1zM241.0,291.0h1V292.3h-1zM242.0,292.3h1V293.3h-1zM248.0,285.6h1V287.2h-1zM249.0,287.2h1V290.2h-1zM251.0,290.2h1V294.9h-1zM253.0,294.9h1V296.3h-1zM262.0,279.1h1V280.6h-1zM264.0,280.6h1V281.6h-1zM269.0,279.4h1V281.2h-1zM271.0,281.2h1V282.2h-1zM274.0,280.3h1V285.5h-1zM276.0,285.5h1V286.5h-1zM280.0,285.7h1V287.7h-1zM281.0,287.7h1V292.3h-1zM283.0,292.3h1V298.1h-1zM287.0,294.7h1V295.7h-1zM289.0,295.0h1V297.5h-1zM292.0,294.0h1V295.0h-1zM294.0,294.1h1V296.0h-1zM296.0,296.0h1V297.0h-1zM297.0,296.6h1V297.9h-1zM304.0,287.1h1V288.1h-1zM306.0,287.2h1V288.3h-1zM310.0,281.0h1V284.1h-1zM322.0,270.3h1V271.3h-1zM324.0,271.3h1V273.5h-1zM326.0,273.5h1V274.5h-1zM328.0,273.8h1V274.8h-1zM329.0,273.9h1V277.6h-1zM331.0,277.6h1V279.0h-1zM335.0,277.5h1V284.9h-1zM338.0,282.4h1V286.3h-1zM340.0,286.3h1V289.8h-1zM342.0,289.8h1V296.8h-1zM344.0,296.8h1V302.6h-1zM347.0,301.7h1V302.7h-1zM352.0,296.6h1V301.4h-1zM354.0,301.4h1V302.4h-1zM356.0,301.7h1V302.7h-1zM360.0,301.9h1V306.0h-1zM361.0,306.0h1V307.0h-1zM363.0,307.0h1V309.2h-1zM365.0,309.2h1V319.1h-1zM367.0,319.1h1V324.5h-1zM368.0,324.5h1V327.0h-1zM370.0,327.0h1V334.1h-1zM372.0,334.1h1V339.3h-1zM376.0,337.1h1V340.4h-1zM377.0,340.4h1V341.5h-1zM383.0,336.3h1V339.2h-1zM388.0,336.8h1V337.8h-1zM390.0,337.4h1V338.4h-1zM391.0,338.4h1V342.0h-1zM395.0,340.6h1V344.0h-1zM397.0,344.0h1V347.1h-1zM409.0,333.0h1V334.0h-1zM415.0,331.3h1V333.5h-1zM418.0,332.9h1V335.8h-1zM420.0,335.8h1V336.8h-1zM423.0,335.5h1V336.5h-1zM425.0,335.8h1V337.1h-1zM429.0,336.6h1V338.9h-1zM432.0,338.3h1V339.8h-1zM434.0,339.8h1V341.6h-1zM436.0,341.6h1V342.9h-1zM439.0,340.3h1V341.3h-1zM446.0,333.8h1V337.0h-1zM450.0,335.4h1V336.4h-1zM452.0,336.1h1V337.1h-1zM454.0,336.2h1V337.2h-1zM457.0,335.6h1V336.6h-1zM459.0,336.3h1V338.9h-1zM464.0,337.7h1V338.7h-1zM470.0,335.2h1V336.2h-1zM471.0,335.2h1V337.6h-1zM475.0,335.2h1V336.2h-1zM477.0,335.5h1V338.0h-1zM478.0,338.0h1V339.1h-1zM491.0,328.1h1V329.2h-1zM507.0,289.1h1V293.3h-1zM509.0,293.3h1V294.3h-1zM512.0,292.4h1V296.8h-1zM514.0,296.8h1V297.8h-1zM518.0,294.0h1V295.0h-1zM519.0,295.0h1V297.8h-1zM523.0,296.0h1V297.0h-1zM537.0,261.3h1V263.8h-1zM539.0,263.8h1V265.9h-1zM544.0,260.6h1V263.6h-1zM548.0,257.4h1V258.4h-1zM549.0,257.9h1V262.4h-1zM553.0,260.5h1V263.6h-1zM555.0,263.6h1V268.7h-1zM558.0,268.5h1V270.6h-1zM560.0,270.6h1V274.2h-1zM562.0,274.2h1V275.2h-1zM564.0,274.2h1V277.3h-1zM565.0,277.3h1V280.5h-1zM567.0,280.5h1V281.9h-1zM583.0,260.0h1V265.0h-1zM585.0,265.0h1V266.0h-1zM590.0,257.9h1V260.5h-1zM592.0,260.5h1V261.7h-1zM594.0,261.7h1V264.8h-1zM603.0,255.4h1V258.0h-1zM608.0,228.0h1V230.1h-1zM610.0,230.1h1V231.9h-1zM622.0,209.5h1V214.2h-1zM624.0,214.2h1V215.2h-1zM642.0,188.4h1V189.4h-1zM644.0,188.6h1V190.5h-1zM645.0,190.5h1V193.0h-1zM649.0,192.0h1V193.0h-1zM670.0,157.6h1V159.8h-1zM672.0,159.8h1V161.4h-1zM674.0,161.4h1V163.4h-1zM675.0,163.4h1V164.5h-1zM679.0,163.6h1V166.4h-1zM681.0,166.4h1V169.7h-1zM683.0,169.7h1V170.7h-1zM686.0,170.3h1V171.3h-1zM691.0,163.2h1V164.4h-1zM695.0,162.9h1V165.7h-1zM706.0,112.0h1V116.1h-1zM707.0,116.1h1V124.9h-1zM709.0,124.9h1V130.9h-1zM711.0,130.9h1V133.1h-1zM713.0,133.1h1V134.1h-1zM715.0,134.0h1V137.6h-1zM716.0,137.6h1V138.6h-1zM718.0,138.5h1V139.5h-1zM720.0,138.8h1V141.0h-1zM722.0,141.0h1V145.1h-1zM729.0,131.4h1V132.4h-1zM730.0,131.6h1V134.0h-1zM734.0,133.6h1V136.4h-1zM736.0,136.4h1V137.4h-1zM738.0,137.4h1V139.0h-1zM741.0,138.2h1V143.9h-1zM743.0,143.9h1V145.0h-1zM746.0,143.2h1V144.2h-1zM748.0,143.3h1V148.9h-1zM752.0,146.5h1V148.1h-1zM762.0,136.2h1V137.2h-1zM770.0,90.3h1V91.3h-1zM771.0,90.9h1V94.1h-1zM773.0,94.1h1V97.3h-1zM775.0,97.3h1V99.4h-1zM777.0,99.4h1V103.8h-1zM778.0,103.8h1V118.1h-1zM780.0,118.1h1V122.6h-1zM786.0,116.8h1V118.1h-1zM789.0,116.3h1V118.5h-1zM791.0,118.5h1V122.6h-1zM793.0,122.6h1V125.6h-1zM794.0,125.6h1V126.6h-1zM796.0,126.6h1V127.6h-1zM800.0,125.9h1V126.9h-1zM807.0,110.1h1V111.1h-1zM810.0,108.4h1V112.8h-1zM812.0,112.8h1V116.0h-1zM816.0,111.8h1V112.8h-1zM817.0,112.5h1V114.0h-1zM839.0,80.5h1V81.5h-1zM841.0,80.6h1V84.4h-1zM842.0,84.4h1V87.5h-1zM844.0,87.5h1V89.2h-1zM846.0,89.2h1V92.1h-1zM848.0,92.1h1V94.5h-1zM849.0,94.5h1V97.8h-1zM853.0,96.2h1V97.2h-1zM855.0,96.9h1V100.4h-1zM857.0,100.4h1V102.4h-1zM858.0,102.4h1V103.8h-1zM860.0,103.8h1V105.7h-1zM862.0,105.7h1V106.7h-1zM871.0,92.7h1V106.6h-1zM872.0,106.6h1V114.5h-1zM874.0,114.5h1V129.6h-1zM876.0,129.6h1V138.5h-1zM880.0,136.1h1V139.3h-1zM881.0,139.3h1V140.5h-1zM885.0,136.9h1V137.9h-1zM887.0,137.6h1V138.6h-1zM888.0,137.6h1V140.7h-1zM890.0,140.7h1V143.4h-1zM892.0,143.4h1V144.4h-1zM896.0,142.1h1V143.1h-1zM897.0,142.9h1V143.9h-1zM899.0,143.6h1V146.1h-1zM901.0,146.1h1V147.1h-1zM912.0,123.9h1V127.5h-1zM913.0,127.5h1V129.4h-1zM915.0,129.4h1V132.8h-1zM924.0,114.4h1V119.5h-1zM926.0,119.5h1V121.1h-1zM928.0,121.1h1V125.2h-1zM931.0,119.3h1V121.3h-1zM933.0,121.3h1V126.0h-1zM935.0,126.0h1V132.8h-1zM936.0,132.8h1V147.5h-1zM938.0,147.5h1V148.5h-1zM940.0,147.7h1V148.7h-1zM949.0,144.5h1V146.4h-1zM956.0,114.7h1V129.3h-1zM958.0,129.3h1V148.2h-1zM959.0,148.2h1V154.1h-1zM961.0,154.1h1V161.0h-1zM963.0,161.0h1V164.7h-1zM972.0,150.0h1V151.0h-1zM975.0,145.8h1V149.6h-1zM977.0,149.6h1V153.1h-1zM981.0,152.2h1V153.2h-1zM984.0,152.9h1V155.8h-1zM988.0,150.7h1V151.7h-1zM993.0,143.3h1V144.3h-1zM995.0,143.8h1V144.8h-1zM999.0,140.7h1V143.1h-1zM1000.0,143.1h1V168.0h-1zM1002.0,168.0h1V183.9h-1zM1004.0,183.9h1V197.9h-1zM1006.0,197.9h1V214.3h-1zM1007.0,214.3h1V224.3h-1zM1009.0,224.3h1V228.4h-1zM1011.0,228.4h1V259.9h-1zM1013.0,259.9h1V269.6h-1zM1014.0,269.6h1V273.8h-1zM1016.0,273.8h1V276.0h-1zM1018.0,276.0h1V285.1h-1zM1022.0,283.6h1V296.7h-1zM1023.0,296.7h1V303.1h-1zM1030.0,283.5h1V293.1h-1zM1034.0,291.6h1V292.6h-1zM1038.0,292.1h1V293.2h-1zM1041.0,290.1h1V293.1h-1zM1045.0,287.8h1V290.2h-1zM1046.0,290.2h1V294.6h-1zM1048.0,294.6h1V304.1h-1zM1050.0,304.1h1V309.8h-1zM1052.0,309.8h1V310.8h-1zM1054.0,309.8h1V315.7h-1zM1055.0,315.7h1V316.7h-1zM1057.0,316.6h1V325.8h-1zM1059.0,325.8h1V328.4h-1zM1070.0,298.8h1V300.4h-1zM1071.0,300.4h1V302.5h-1zM1073.0,302.5h1V303.6h-1zM1075.0,303.6h1V309.7h-1zM1080.0,302.1h1V312.2h-1zM1101.0,236.8h1V237.8h-1zM1107.0,232.8h1V242.9h-1zM1109.0,242.9h1V247.8h-1zM1110.0,247.8h1V254.6h-1zM1117.0,245.9h1V247.8h-1zM1119.0,247.8h1V248.8h-1zM1121.0,248.7h1V254.7h-1zM1123.0,254.7h1V258.3h-1zM1128.0,253.1h1V254.1h-1zM1132.0,248.7h1V249.7h-1zM1133.0,249.1h1V251.5h-1zM1141.0,237.7h1V243.1h-1zM1142.0,243.1h1V244.8h-1zM1144.0,244.8h1V248.3h-1zM1146.0,248.3h1V250.2h-1zM1148.0,250.2h1V258.0h-1zM1149.0,258.0h1V265.5h-1zM1151.0,265.5h1V267.4h-1zM1153.0,267.4h1V279.0h-1zM1155.0,279.0h1V286.8h-1zM1156.0,286.8h1V288.0h-1zM1158.0,288.0h1V297.8h-1zM1160.0,297.8h1V304.0h-1zM1162.0,304.0h1V310.5h-1zM1164.0,310.5h1V316.2h-1zM1178.0,275.5h1V277.9h-1zM1180.0,277.9h1V282.1h-1zM1185.0,281.0h1V285.5h-1zM1188.0,282.3h1V283.3h-1zM1190.0,282.3h1V286.4h-1zM1192.0,286.4h1V289.9h-1zM1197.0,284.4h1V286.7h-1zM1204.0,280.2h1V282.7h-1zM1206.0,282.7h1V288.9h-1zM1208.0,288.9h1V293.6h-1zM1210.0,293.6h1V299.3h-1zM1212.0,299.3h1V304.2h-1zM1213.0,304.2h1V312.2h-1zM1215.0,312.2h1V316.2h-1zM1219.0,314.8h1V317.7h-1zM1224.0,313.9h1V314.9h-1zM1226.0,313.9h1V314.9h-1zM1229.0,313.1h1V314.1h-1zM1231.0,314.0h1V315.9h-1zM1243.0,301.3h1V306.1h-1zM1245.0,306.1h1V307.5h-1zM1249.0,305.0h1V306.2h-1zM1252.0,305.6h1V309.5h-1zM1254.0,309.5h1V316.7h-1zM1256.0,316.7h1V318.1h-1zM1258.0,318.1h1V331.8h-1zM1259.0,331.8h1V344.9h-1zM1261.0,344.9h1V351.7h-1zM1263.0,351.7h1V354.8h-1zM1265.0,354.8h1V359.3h-1zM1268.0,356.8h1V357.8h-1zM1270.0,356.9h1V359.7h-1zM1274.0,354.2h1V357.3h-1zM1279.0,347.2h1V348.6h-1zM1281.0,348.6h1V352.5h-1zM1283.0,352.5h1V353.5h-1zM1284.0,352.7h1V361.8h-1zM1286.0,361.8h1V381.7h-1zM1288.0,381.7h1V404.7h-1zM1290.0,404.7h1V410.6h-1zM1291.0,410.6h1V420.6h-1zM1298.0,400.9h1V402.7h-1zM1307.0,372.9h1V377.0h-1zM1313.0,373.7h1V378.9h-1zM1316.0,378.8h1V379.8h-1zM1323.0,377.1h1V378.7h-1zM1330.0,377.5h1V378.5h-1zM1341.0,374.3h1V378.4h-1zM1343.0,378.4h1V379.5h-1zM1346.0,376.4h1V377.4h-1zM1352.0,372.2h1V376.1h-1zM1354.0,376.1h1V377.1h-1zM1355.0,376.4h1V377.7h-1zM1362.0,372.5h1V374.3h-1zM1366.0,373.6h1V374.6h-1zM1368.0,373.9h1V376.8h-1zM1370.0,376.8h1V379.0h-1zM1371.0,379.0h1V382.1h-1zM1373.0,382.1h1V383.1h-1zM1380.0,360.6h1V361.6h-1zM1393.0,341.7h1V345.5h-1zM1396.0,345.2h1V348.4h-1zM1400.0,347.1h1V349.5h-1zM1401.0,349.5h1V354.1h-1zM1403.0,354.1h1V358.2h-1zM1416.0,308.2h1V310.1h-1zM1417.0,310.1h1V312.6h-1zM1419.0,312.6h1V313.6h-1zM1421.0,312.8h1V315.4h-1zM1425.0,311.1h1V312.1h-1zM1428.0,305.6h1V306.7h-1zM1430.0,306.7h1V310.5h-1zM1432.0,310.5h1V314.6h-1zM1433.0,314.6h1V317.1h-1zM1439.0,312.4h1V316.3h-1zM1440.0,316.3h1V322.0h-1zM1442.0,322.0h1V323.0h-1zM1444.0,322.8h1V326.2h-1zM1446.0,326.2h1V331.7h-1zM1448.0,331.7h1V335.6h-1zM1449.0,335.6h1V339.7h-1zM1451.0,339.7h1V356.3h-1zM1453.0,356.3h1V370.4h-1zM1458.0,362.6h1V363.6h-1zM1460.0,362.9h1V364.1h-1zM1474.0,272.9h1V282.7h-1zM1476.0,282.7h1V287.4h-1zM1478.0,287.4h1V295.2h-1zM1480.0,295.2h1V302.0h-1zM1481.0,302.0h1V311.1h-1zM1483.0,311.1h1V317.3h-1zM1485.0,317.3h1V339.2h-1zM1487.0,339.2h1V343.9h-1zM1488.0,343.9h1V347.9h-1zM1490.0,347.9h1V349.7h-1zM1492.0,349.7h1V352.4h-1zM1494.0,352.4h1V356.3h-1zM1496.0,356.3h1V360.2h-1z" fill="#e8505c"/><path d="M11.0,229.0 L11.8,229.0 L12.8,229.0 L14.0,229.1 L15.3,229.1 L16.7,229.2 L18.2,229.2 L19.7,229.3 L21.4,229.3 L23.1,229.3 L24.8,229.4 L26.5,229.4 L28.3,229.4 L30.0,229.3 L31.7,229.2 L33.4,229.1 L35.0,229.0 L36.5,228.8 L37.9,228.7 L39.4,228.5 L40.9,228.3 L42.4,228.0 L43.9,227.8 L45.4,227.5 L46.9,227.2 L48.4,226.9 L49.9,226.6 L51.4,226.3 L53.0,225.9 L54.6,225.6 L56.1,225.2 L57.7,224.8 L59.4,224.4 L61.0,224.0 L62.4,223.6 L63.9,223.2 L65.4,222.7 L67.0,222.2 L68.5,221.7 L70.1,221.2 L71.8,220.6 L73.4,220.1 L75.0,219.5 L76.6,218.9 L78.2,218.4 L79.8,217.9 L81.4,217.3 L82.9,216.9 L84.4,216.4 L85.8,216.0 L87.2,215.7 L88.5,215.4 L89.8,215.2 L91.0,215.0 L93.1,214.8 L94.9,214.8 L96.5,214.9 L97.9,215.2 L99.2,215.6 L100.6,216.1 L101.9,216.7 L103.4,217.4 L105.1,218.1 L107.0,219.0 L108.3,219.6 L109.6,220.2 L111.0,221.0 L112.4,221.8 L113.9,222.7 L115.4,223.6 L116.9,224.5 L118.5,225.5 L120.1,226.4 L121.7,227.4 L123.3,228.3 L125.0,229.2 L126.6,230.1 L128.2,230.9 L129.8,231.7 L131.4,232.4 L133.0,233.0 L134.5,233.5 L136.0,234.0 L137.4,234.4 L138.9,234.8 L140.4,235.2 L141.9,235.5 L143.4,235.8 L144.9,236.1 L146.4,236.4 L147.9,236.6 L149.5,236.8 L151.0,237.0 L152.5,237.2 L154.0,237.4 L155.5,237.6 L157.0,237.7 L158.5,237.9 L160.0,238.0 L161.5,238.1 L163.0,238.2 L164.6,238.3 L166.2,238.3 L167.8,238.3 L169.3,238.3 L170.9,238.3 L172.5,238.2 L174.1,238.2 L175.6,238.1 L177.2,238.1 L178.7,238.0 L180.2,238.0 L181.6,238.0 L183.0,237.9 L184.4,237.9 L185.7,238.0 L187.0,238.0 L188.8,238.1 L190.5,238.1 L192.0,238.0 L193.5,238.0 L194.9,238.0 L196.3,238.0 L197.7,238.1 L199.0,238.2 L200.4,238.5 L201.9,238.8 L203.4,239.3 L205.0,240.0 L206.5,240.7 L207.9,241.5 L209.5,242.5 L211.0,243.5 L212.6,244.6 L214.2,245.8 L215.8,247.1 L217.4,248.3 L219.1,249.6 L220.7,250.9 L222.3,252.3 L223.9,253.5 L225.4,254.8 L227.0,256.0 L228.6,257.2 L230.1,258.4 L231.8,259.7 L233.4,261.0 L235.0,262.3 L236.6,263.6 L238.2,264.9 L239.8,266.2 L241.4,267.4 L242.8,268.6 L244.2,269.8 L245.6,270.9 L246.8,272.0 L248.0,273.0 L250.1,275.1 L251.5,277.0 L252.6,278.8 L253.8,280.3 L255.5,281.7 L258.0,283.0 L259.1,283.4 L260.3,283.8 L261.6,284.2 L263.0,284.5 L264.4,284.9 L265.9,285.2 L267.5,285.5 L269.1,285.8 L270.8,286.1 L272.4,286.3 L274.1,286.6 L275.7,286.8 L277.4,287.0 L279.0,287.3 L280.6,287.5 L282.1,287.6 L283.6,287.8 L285.0,288.0 L286.7,288.2 L288.3,288.4 L289.9,288.6 L291.4,288.8 L292.8,288.9 L294.3,289.1 L295.7,289.2 L297.1,289.3 L298.6,289.3 L300.1,289.3 L301.7,289.3 L303.4,289.3 L305.1,289.2 L307.0,289.0 L308.3,288.9 L309.7,288.7 L311.1,288.4 L312.6,288.1 L314.2,287.8 L315.7,287.5 L317.3,287.1 L319.0,286.7 L320.6,286.3 L322.2,285.9 L323.9,285.6 L325.5,285.2 L327.2,284.8 L328.8,284.4 L330.4,284.1 L331.9,283.8 L333.4,283.6 L334.9,283.3 L336.3,283.2 L337.7,283.1 L339.0,283.0 L340.8,283.0 L342.6,283.0 L344.3,283.1 L345.9,283.2 L347.4,283.3 L348.9,283.5 L350.3,283.8 L351.7,284.2 L353.1,284.6 L354.5,285.1 L355.8,285.7 L357.2,286.3 L358.6,287.1 L360.0,288.0 L361.6,289.2 L363.2,290.5 L364.7,292.1 L366.1,293.7 L367.6,295.5 L369.0,297.3 L370.5,299.2 L372.0,301.2 L373.6,303.2 L375.3,305.1 L377.1,307.1 L379.0,309.0 L380.3,310.2 L381.7,311.5 L383.1,312.8 L384.6,314.2 L386.2,315.6 L387.8,317.0 L389.4,318.5 L391.0,319.9 L392.7,321.4 L394.3,322.8 L396.0,324.2 L397.6,325.5 L399.2,326.8 L400.8,328.0 L402.4,329.2 L403.9,330.3 L405.3,331.3 L406.7,332.2 L408.0,333.0 L409.8,334.0 L411.4,334.9 L412.7,335.5 L413.8,335.9 L414.9,336.2 L416.0,336.4 L417.2,336.6 L418.5,336.6 L420.1,336.7 L422.0,336.7 L424.3,336.8 L427.0,337.0 L428.1,337.1 L429.2,337.2 L430.4,337.2 L431.7,337.3 L433.0,337.4 L434.4,337.5 L435.9,337.6 L437.4,337.7 L438.9,337.7 L440.5,337.8 L442.1,337.9 L443.8,338.0 L445.4,338.1 L447.1,338.1 L448.9,338.2 L450.6,338.3 L452.3,338.3 L454.1,338.4 L455.8,338.5 L457.5,338.5 L459.3,338.5 L461.0,338.6 L462.7,338.6 L464.3,338.6 L466.0,338.6 L467.6,338.6 L469.2,338.6 L470.7,338.6 L472.2,338.5 L473.7,338.5 L475.0,338.4 L476.4,338.3 L477.7,338.2 L478.9,338.1 L480.0,338.0 L482.3,337.7 L484.4,337.4 L486.3,337.0 L488.0,336.6 L489.5,336.2 L491.0,335.7 L492.3,335.1 L493.6,334.6 L494.9,333.9 L496.1,333.3 L497.3,332.5 L498.5,331.7 L499.7,330.9 L501.1,330.0 L502.5,329.0 L504.0,328.0 L505.4,327.0 L506.9,326.0 L508.3,324.9 L509.8,323.7 L511.3,322.5 L512.7,321.2 L514.2,319.9 L515.7,318.6 L517.2,317.2 L518.8,315.8 L520.3,314.3 L521.8,312.9 L523.3,311.4 L524.9,309.9 L526.4,308.5 L527.9,307.0 L529.5,305.5 L531.0,304.0 L532.5,302.5 L534.1,300.9 L535.6,299.2 L537.2,297.5 L538.7,295.7 L540.3,293.9 L541.9,292.1 L543.4,290.3 L545.0,288.5 L546.6,286.7 L548.1,285.0 L549.7,283.3 L551.3,281.7 L552.8,280.1 L554.4,278.7 L555.9,277.3 L557.5,276.1 L559.0,275.0 L560.5,274.0 L562.1,273.2 L563.6,272.4 L565.2,271.7 L566.8,271.1 L568.3,270.6 L569.9,270.1 L571.5,269.7 L573.0,269.3 L574.5,269.0 L576.1,268.7 L577.6,268.4 L579.0,268.2 L580.5,268.0 L581.9,267.7 L583.3,267.5 L584.7,267.3 L586.0,267.0 L587.8,266.7 L589.5,266.5 L591.1,266.5 L592.7,266.5 L594.2,266.6 L595.7,266.7 L597.2,266.8 L598.6,266.8 L600.1,266.7 L601.5,266.6 L603.0,266.2 L604.5,265.7 L606.0,265.0 L607.5,264.1 L609.0,263.1 L610.5,262.0 L611.9,260.8 L613.4,259.5 L614.8,258.1 L616.3,256.5 L617.8,254.9 L619.3,253.1 L620.9,251.3 L622.5,249.3 L624.2,247.2 L626.0,245.0 L627.3,243.3 L628.7,241.4 L630.1,239.4 L631.6,237.4 L633.1,235.2 L634.6,232.9 L636.1,230.6 L637.7,228.3 L639.2,225.9 L640.8,223.5 L642.4,221.1 L644.0,218.7 L645.5,216.4 L647.1,214.2 L648.6,212.0 L650.1,209.9 L651.6,207.9 L653.0,206.0 L654.6,204.0 L656.2,202.0 L657.7,200.1 L659.2,198.2 L660.8,196.4 L662.3,194.6 L663.8,192.9 L665.2,191.2 L666.7,189.6 L668.2,188.0 L669.7,186.5 L671.1,185.1 L672.6,183.7 L674.1,182.4 L675.5,181.2 L677.0,180.0 L678.6,178.9 L680.1,177.9 L681.7,177.0 L683.3,176.3 L684.9,175.6 L686.4,175.0 L688.0,174.5 L689.5,174.0 L691.1,173.5 L692.6,173.0 L694.1,172.5 L695.6,172.0 L697.1,171.4 L698.6,170.7 L700.0,170.0 L701.6,169.1 L703.2,168.1 L704.7,167.1 L706.2,166.1 L707.7,165.0 L709.1,163.9 L710.6,162.8 L712.1,161.7 L713.6,160.6 L715.1,159.4 L716.7,158.3 L718.3,157.2 L720.0,156.0 L721.4,155.0 L722.9,154.1 L724.3,153.1 L725.8,152.0 L727.3,151.0 L728.9,149.9 L730.4,148.9 L732.0,147.8 L733.6,146.8 L735.2,145.7 L736.8,144.7 L738.4,143.7 L740.1,142.7 L741.7,141.8 L743.3,140.9 L745.0,140.0 L746.5,139.3 L747.9,138.6 L749.4,137.9 L750.9,137.3 L752.3,136.7 L753.8,136.1 L755.3,135.5 L756.8,134.9 L758.3,134.4 L759.8,133.8 L761.4,133.3 L763.0,132.7 L764.6,132.1 L766.2,131.6 L767.8,130.9 L769.5,130.3 L771.2,129.7 L773.0,129.0 L774.4,128.5 L775.8,127.9 L777.2,127.3 L778.7,126.7 L780.3,126.1 L781.9,125.5 L783.5,124.8 L785.1,124.1 L786.7,123.5 L788.3,122.8 L790.0,122.2 L791.6,121.5 L793.3,120.8 L794.9,120.2 L796.5,119.6 L798.0,119.0 L799.6,118.4 L801.1,117.8 L802.5,117.3 L803.9,116.7 L805.3,116.2 L806.6,115.8 L807.8,115.4 L809.0,115.0 L811.1,114.4 L813.0,113.9 L814.7,113.6 L816.2,113.4 L817.6,113.3 L818.9,113.2 L820.2,113.1 L821.4,113.0 L822.7,112.9 L824.0,112.7 L825.5,112.4 L827.0,112.0 L828.4,111.5 L829.8,111.0 L831.3,110.4 L832.8,109.7 L834.3,109.0 L835.8,108.3 L837.3,107.6 L838.8,106.8 L840.4,106.1 L841.9,105.4 L843.4,104.7 L845.0,104.1 L846.5,103.5 L848.0,103.0 L849.5,102.5 L851.0,102.0 L852.5,101.4 L854.0,100.8 L855.5,100.2 L856.9,99.7 L858.4,99.2 L859.9,98.8 L861.4,98.5 L862.9,98.2 L864.4,98.2 L865.9,98.3 L867.5,98.5 L869.0,99.0 L870.6,99.7 L872.2,100.7 L873.8,101.8 L875.4,103.2 L877.1,104.7 L878.8,106.3 L880.4,108.0 L882.1,109.7 L883.7,111.5 L885.3,113.2 L886.8,114.8 L888.3,116.4 L889.7,117.8 L891.0,119.0 L892.9,120.7 L894.6,122.3 L896.1,123.8 L897.6,125.2 L898.9,126.5 L900.3,127.7 L901.8,128.9 L903.3,130.0 L905.0,131.0 L906.4,131.7 L907.8,132.5 L909.2,133.2 L910.7,133.8 L912.2,134.4 L913.8,135.0 L915.3,135.5 L916.9,136.0 L918.4,136.3 L920.0,136.6 L921.5,136.9 L923.0,137.0 L924.5,137.0 L926.0,136.9 L927.6,136.7 L929.1,136.3 L930.7,135.9 L932.2,135.5 L933.8,135.0 L935.3,134.6 L936.8,134.1 L938.2,133.7 L939.6,133.3 L941.0,133.0 L942.7,132.6 L944.2,132.2 L945.7,131.8 L947.1,131.4 L948.5,131.0 L950.0,130.8 L951.5,130.7 L953.2,130.7 L955.0,131.0 L956.3,131.3 L957.6,131.7 L959.0,132.2 L960.5,132.8 L961.9,133.5 L963.5,134.2 L965.0,135.0 L966.6,135.7 L968.1,136.5 L969.7,137.3 L971.3,138.0 L972.9,138.7 L974.5,139.4 L976.0,140.0 L977.6,140.5 L979.2,141.0 L980.9,141.3 L982.6,141.7 L984.3,142.0 L986.0,142.3 L987.8,142.7 L989.4,143.0 L991.1,143.4 L992.6,143.9 L994.1,144.4 L995.5,145.0 L996.8,145.7 L998.0,146.5 L1000.2,148.8 L1001.9,151.7 L1003.2,154.8 L1004.3,158.1 L1005.5,161.5 L1007.0,164.7 L1008.4,167.3 L1009.9,169.8 L1011.4,172.4 L1013.0,175.0 L1014.6,177.8 L1016.3,180.8 L1018.0,184.2 L1019.4,187.1 L1020.9,190.2 L1022.4,193.4 L1024.0,196.8 L1025.6,200.3 L1027.2,203.9 L1028.8,207.6 L1030.4,211.3 L1032.0,215.0 L1033.6,218.8 L1035.2,222.9 L1036.8,227.0 L1038.4,231.2 L1040.1,235.5 L1041.6,239.6 L1043.2,243.7 L1044.6,247.6 L1046.0,251.3 L1047.9,256.6 L1049.7,261.6 L1051.4,266.5 L1053.0,271.0 L1054.6,275.2 L1056.0,279.0 L1057.9,283.8 L1059.6,287.7 L1061.2,291.0 L1063.0,294.0 L1064.5,296.2 L1066.0,298.1 L1067.6,299.8 L1069.3,301.3 L1071.0,302.5 L1072.6,303.4 L1074.2,304.2 L1075.9,304.8 L1077.6,305.3 L1079.3,305.5 L1081.0,305.5 L1082.7,305.2 L1084.4,304.7 L1086.1,303.9 L1087.7,303.0 L1089.4,302.0 L1091.0,301.0 L1092.4,300.1 L1093.7,299.3 L1094.9,298.3 L1096.3,297.1 L1097.9,295.4 L1100.0,293.0 L1101.3,291.4 L1102.7,289.5 L1104.2,287.4 L1105.9,285.1 L1107.6,282.7 L1109.4,280.2 L1111.1,277.7 L1112.9,275.3 L1114.6,272.9 L1116.2,270.7 L1117.7,268.7 L1119.0,267.0 L1121.0,264.5 L1122.8,262.5 L1124.4,260.8 L1125.8,259.3 L1127.2,258.0 L1128.6,256.7 L1130.0,255.5 L1131.6,254.1 L1133.2,252.8 L1134.8,251.7 L1136.2,250.7 L1137.6,250.0 L1139.0,249.5 L1140.9,249.3 L1142.6,249.5 L1144.3,250.2 L1146.0,251.0 L1147.4,251.8 L1148.6,252.8 L1150.3,254.3 L1153.0,256.5 L1154.1,257.3 L1155.3,258.3 L1156.6,259.3 L1158.0,260.5 L1159.5,261.6 L1161.0,262.9 L1162.6,264.2 L1164.3,265.5 L1165.9,266.8 L1167.6,268.1 L1169.2,269.4 L1170.9,270.6 L1172.5,271.8 L1174.0,273.0 L1175.5,274.1 L1177.0,275.3 L1178.4,276.5 L1179.9,277.7 L1181.3,278.9 L1182.8,280.1 L1184.2,281.2 L1185.7,282.3 L1187.2,283.4 L1188.7,284.5 L1190.2,285.5 L1191.8,286.4 L1193.4,287.2 L1195.0,288.0 L1196.5,288.6 L1197.9,289.1 L1199.5,289.5 L1201.0,289.9 L1202.6,290.2 L1204.1,290.4 L1205.7,290.7 L1207.3,290.9 L1208.9,291.1 L1210.5,291.3 L1212.1,291.5 L1213.7,291.7 L1215.3,292.0 L1216.9,292.3 L1218.5,292.6 L1220.0,293.0 L1221.5,293.4 L1223.1,293.9 L1224.7,294.4 L1226.3,294.9 L1227.9,295.4 L1229.5,296.0 L1231.1,296.6 L1232.6,297.1 L1234.2,297.7 L1235.7,298.3 L1237.2,298.9 L1238.7,299.5 L1240.1,300.1 L1241.4,300.8 L1242.7,301.4 L1244.0,302.0 L1245.8,303.0 L1247.5,304.0 L1249.0,304.9 L1250.4,305.9 L1251.7,306.9 L1253.0,308.0 L1254.3,309.1 L1255.8,310.3 L1257.3,311.6 L1259.0,313.0 L1260.3,314.1 L1261.8,315.2 L1263.3,316.4 L1264.8,317.7 L1266.4,319.0 L1268.1,320.3 L1269.7,321.7 L1271.3,323.1 L1272.9,324.4 L1274.5,325.8 L1276.0,327.1 L1277.4,328.5 L1278.8,329.8 L1280.0,331.0 L1281.9,333.1 L1283.6,335.0 L1285.0,336.9 L1286.4,338.8 L1287.7,340.7 L1289.0,342.7 L1290.4,344.8 L1292.0,347.0 L1293.4,348.9 L1294.8,351.1 L1296.3,353.3 L1297.8,355.6 L1299.4,357.9 L1300.9,360.2 L1302.5,362.4 L1304.0,364.4 L1305.5,366.3 L1307.0,368.0 L1308.6,369.6 L1310.2,371.0 L1311.7,372.3 L1313.2,373.4 L1314.8,374.4 L1316.3,375.3 L1317.8,376.2 L1319.4,377.1 L1321.0,378.0 L1322.5,378.9 L1324.0,379.8 L1325.5,380.7 L1327.1,381.6 L1328.6,382.5 L1330.2,383.3 L1331.7,383.9 L1333.2,384.5 L1334.6,384.8 L1336.0,385.0 L1337.6,384.8 L1339.2,384.3 L1340.6,383.5 L1342.1,382.6 L1343.5,381.5 L1344.9,380.5 L1346.4,379.6 L1348.0,379.0 L1349.5,378.6 L1351.0,378.3 L1352.5,378.0 L1354.0,377.8 L1355.6,377.6 L1357.2,377.4 L1358.8,377.3 L1360.4,377.2 L1362.0,377.0 L1363.5,376.9 L1364.9,376.9 L1366.4,376.9 L1367.9,377.0 L1369.4,377.0 L1370.9,377.0 L1372.4,376.9 L1373.9,376.8 L1375.5,376.5 L1377.0,376.0 L1378.6,375.4 L1380.2,374.6 L1381.8,373.7 L1383.4,372.6 L1385.0,371.6 L1386.6,370.4 L1388.2,369.3 L1389.8,368.1 L1391.4,367.0 L1393.0,366.0 L1394.5,365.0 L1396.0,364.1 L1397.5,363.3 L1399.0,362.4 L1400.4,361.6 L1401.9,360.6 L1403.4,359.7 L1404.9,358.6 L1406.4,357.4 L1408.0,356.0 L1409.5,354.6 L1411.0,353.0 L1412.6,351.3 L1414.2,349.5 L1415.8,347.6 L1417.4,345.7 L1419.0,343.8 L1420.5,341.9 L1422.1,340.2 L1423.6,338.5 L1425.0,337.0 L1426.7,335.3 L1428.3,333.6 L1429.9,332.0 L1431.4,330.5 L1432.9,329.1 L1434.4,327.8 L1435.9,326.7 L1437.4,325.7 L1439.0,325.0 L1440.5,324.6 L1442.0,324.3 L1443.5,324.2 L1445.1,324.2 L1446.6,324.4 L1448.2,324.6 L1449.7,324.9 L1451.2,325.3 L1452.6,325.6 L1454.0,326.0 L1455.6,326.6 L1457.2,327.4 L1458.7,328.4 L1460.2,329.4 L1461.6,330.3 L1463.1,331.2 L1464.5,331.7 L1466.0,332.0 L1467.5,331.8 L1469.0,331.3 L1470.6,330.5 L1472.1,329.6 L1473.6,328.7 L1475.1,327.9 L1476.6,327.3 L1478.0,327.0 L1479.8,327.1 L1481.5,327.5 L1483.2,328.2 L1484.8,329.0 L1486.4,330.0 L1488.0,331.0 L1489.7,332.2 L1491.4,333.7 L1493.1,335.2 L1494.7,336.8 L1496.0,338.1 L1497.0,339.0" stroke="#3b86d6" stroke-width="1.1" fill="none" stroke-linejoin="round"/></g><text x="20.2" y="51.8" font-family="Liberation Sans, sans-serif" font-size="13.2" fill="#cdcfd4" stroke="#cdcfd4" stroke-width="0.3" textLength="216.0" lengthAdjust="spacingAndGlyphs">Bitcoin / U.S. Dollar · 1h · Bitstamp</text><text x="244.7" y="51.8" font-family="Liberation Sans, sans-serif" font-size="13.2" fill="#cdcfd4" stroke="#cdcfd4" stroke-width="0.3" textLength="8.8" lengthAdjust="spacingAndGlyphs">O</text><text x="255.4" y="51.8" font-family="Liberation Sans, sans-serif" font-size="13.2" fill="#26a08c" stroke="#26a08c" stroke-width="0.3" textLength="45.5" lengthAdjust="spacingAndGlyphs">108,040</text><text x="309.8" y="51.8" font-family="Liberation Sans, sans-serif" font-size="13.2" fill="#cdcfd4" stroke="#cdcfd4" stroke-width="0.3" textLength="8.2" lengthAdjust="spacingAndGlyphs">H</text><text x="319.5" y="51.8" font-family="Liberation Sans, sans-serif" font-size="13.2" fill="#26a08c" stroke="#26a08c" stroke-width="0.3" textLength="45.6" lengthAdjust="spacingAndGlyphs">108,336</text><text x="374.0" y="51.8" font-family="Liberation Sans, sans-serif" font-size="13.2" fill="#cdcfd4" stroke="#cdcfd4" stroke-width="0.3" textLength="6.7" lengthAdjust="spacingAndGlyphs">L</text><text x="381.7" y="51.8" font-family="Liberation Sans, sans-serif" font-size="13.2" fill="#26a08c" stroke="#26a08c" stroke-width="0.3" textLength="45.6" lengthAdjust="spacingAndGlyphs">107,653</text><text x="436.3" y="51.8" font-family="Liberation Sans, sans-serif" font-size="13.2" fill="#cdcfd4" stroke="#cdcfd4" stroke-width="0.3" textLength="8.0" lengthAdjust="spacingAndGlyphs">C</text><text x="445.8" y="51.8" font-family="Liberation Sans, sans-serif" font-size="13.2" fill="#26a08c" stroke="#26a08c" stroke-width="0.3" textLength="44.7" lengthAdjust="spacingAndGlyphs">108,201</text><text x="500.0" y="51.8" font-family="Liberation Sans, sans-serif" font-size="13.2" fill="#26a08c" stroke="#26a08c" stroke-width="0.3" textLength="82.7" lengthAdjust="spacingAndGlyphs">+147 (+0.14%)</text><text x="20.2" y="70.9" font-family="Liberation Sans, sans-serif" font-size="13.2" fill="#cdcfd4" stroke="#cdcfd4" stroke-width="0.3" textLength="84.8" lengthAdjust="spacingAndGlyphs">MA (30, close)</text><text x="114.4" y="70.9" font-family="Liberation Sans, sans-serif" font-size="13.2" fill="#3b86d6" stroke="#3b86d6" stroke-width="0.3" textLength="45.9" lengthAdjust="spacingAndGlyphs">109,322</text><rect x="1522" y="35" width="60.5" height="28" rx="6" fill="#0f0f0f" stroke="#363636"/><text x="1532.3" y="53.7" font-family="Liberation Sans, sans-serif" font-size="13.2" fill="#cdcfd4" stroke="#cdcfd4" stroke-width="0.6" textLength="24.0" lengthAdjust="spacingAndGlyphs">USD</text><text x="1527.4" y="98.0" font-family="Liberation Sans, sans-serif" font-size="13.3" fill="#bdbdbd" stroke="#bdbdbd" stroke-width="0.3" textLength="48.3" lengthAdjust="spacingAndGlyphs">125,000</text><text x="1527.4" y="136.9" font-family="Liberation Sans, sans-serif" font-size="13.3" fill="#bdbdbd" stroke="#bdbdbd" stroke-width="0.3" textLength="48.3" lengthAdjust="spacingAndGlyphs">122,500</text><text x="1527.4" y="175.7" font-family="Liberation Sans, sans-serif" font-size="13.3" fill="#bdbdbd" stroke="#bdbdbd" stroke-width="0.3" textLength="48.3" lengthAdjust="spacingAndGlyphs">120,000</text><text x="1527.4" y="214.4" font-family="Liberation Sans, sans-serif" font-size="13.3" fill="#bdbdbd" stroke="#bdbdbd" stroke-width="0.3" textLength="48.3" lengthAdjust="spacingAndGlyphs">117,500</text><text x="1527.4" y="254.5" font-family="Liberation Sans, sans-serif" font-size="13.3" fill="#bdbdbd" stroke="#bdbdbd" stroke-width="0.3" textLength="48.3" lengthAdjust="spacingAndGlyphs">115,000</text><text x="1527.4" y="293.7" font-family="Liberation Sans, sans-serif" font-size="13.3" fill="#bdbdbd" stroke="#bdbdbd" stroke-width="0.3" textLength="48.3" lengthAdjust="spacingAndGlyphs">112,500</text><text x="1527.4" y="333.0" font-family="Liberation Sans, sans-serif" font-size="13.3" fill="#bdbdbd" stroke="#bdbdbd" stroke-width="0.3" textLength="48.3" lengthAdjust="spacingAndGlyphs">110,000</text><text x="1527.4" y="372.2" font-family="Liberation Sans, sans-serif" font-size="13.3" fill="#bdbdbd" stroke="#bdbdbd" stroke-width="0.3" textLength="48.3" lengthAdjust="spacingAndGlyphs">107,500</text><text x="1527.4" y="411.8" font-family="Liberation Sans, sans-serif" font-size="13.3" fill="#bdbdbd" stroke="#bdbdbd" stroke-width="0.3" textLength="48.3" lengthAdjust="spacingAndGlyphs">105,000</text><text x="1527.4" y="450.5" font-family="Liberation Sans, sans-serif" font-size="13.3" fill="#bdbdbd" stroke="#bdbdbd" stroke-width="0.3" textLength="48.3" lengthAdjust="spacingAndGlyphs">102,500</text><path d="M1518,329.3h62a2,2 0 0 1 2,2v14.4a2,2 0 0 1 -2,2h-62z" fill="#2196f3"/><text x="1529.4" y="343.4" font-family="Liberation Sans, sans-serif" font-size="13.8" fill="#ffffff" stroke="#ffffff" stroke-width="0.3" textLength="46.6" lengthAdjust="spacingAndGlyphs">109,322</text><path d="M1518,349.2h62a2,2 0 0 1 2,2v14.6a2,2 0 0 1 -2,2h-62z" fill="#089981"/><text x="1529.4" y="363.3" font-family="Liberation Sans, sans-serif" font-size="13.8" fill="#ffffff" stroke="#ffffff" stroke-width="0.3" textLength="46.6" lengthAdjust="spacingAndGlyphs">108,201</text><path d="M1463.3,348.7h53.4v19.1h-53.4a2,2 0 0 1 -2,-2v-15.1a2,2 0 0 1 2,-2z" fill="#089981"/><text x="1465.1" y="363.3" font-family="Liberation Sans, sans-serif" font-size="13.8" fill="#ffffff" stroke="#ffffff" stroke-width="0.3" textLength="47.4" lengthAdjust="spacingAndGlyphs">BTCUSD</text><g><path d="M1489.15,449.3 A10.3,10.3 0 1 1 1491,458.8" stroke="#ad58cf" stroke-width="1.6" fill="none"/><path d="M1501.7,447 L1494.8,452.6 L1502,452.3 L1495.2,458.4" stroke="#c060e0" stroke-width="1.6" fill="none" stroke-linejoin="miter"/><path d="M1486.7,451 Q1487.3,455.8 1492.2,456.4 Q1487.3,457 1486.7,461.8 Q1486.1,457 1481.2,456.4 Q1486.1,455.8 1486.7,451z" fill="#7c5cf8"/><circle cx="1506.1" cy="444.6" r="3.0" fill="#f23645" stroke="#0f0f0f" stroke-width="1.2" paint-order="stroke"/></g><rect x="11" y="536" width="1506" height="90" fill="#7e57c2" fill-opacity="0.1"/><path d="M11,536.5H1517" stroke="#8f929a" stroke-opacity="0.85" stroke-width="1" stroke-dasharray="5,6"/><path d="M11,581.5H1517" stroke="#8f929a" stroke-opacity="0.85" stroke-width="1" stroke-dasharray="5,6"/><path d="M11,626.5H1517" stroke="#8f929a" stroke-opacity="0.85" stroke-width="1" stroke-dasharray="5,6"/><g clip-path="url(#cr)"><path d="M490.2,536.5 L490.2,535.9 L490.7,535.2 L491.2,534.5 L491.8,533.8 L492.3,533.1 L492.8,532.2 L493.4,531.3 L493.9,530.3 L494.4,529.4 L494.9,528.8 L495.4,528.2 L496.0,527.6 L496.5,527.0 L497.0,523.9 L497.5,520.8 L498.0,517.7 L498.5,514.6 L499.1,511.5 L499.6,507.8 L500.1,504.0 L500.6,500.2 L501.1,496.5 L501.6,492.7 L502.2,493.5 L502.9,494.3 L503.5,495.2 L504.1,493.5 L504.8,491.9 L505.4,490.2 L505.9,494.7 L506.4,499.3 L506.9,503.8 L507.4,508.3 L507.9,512.8 L508.4,517.4 L508.9,521.9 L509.4,522.8 L509.9,523.8 L510.5,524.7 L511.0,525.6 L511.5,526.5 L512.0,527.4 L512.6,528.3 L513.1,529.2 L513.6,530.9 L514.2,532.6 L514.7,534.2 L515.2,535.9 L515.9,533.6 L516.5,531.2 L517.2,528.9 L517.8,527.4 L518.5,526.0 L519.1,524.5 L519.6,524.6 L520.2,524.8 L520.7,524.9 L521.2,525.1 L521.7,525.5 L522.2,525.8 L522.8,526.2 L523.3,526.5 L523.8,526.3 L524.3,526.1 L524.9,525.9 L525.4,525.7 L525.9,527.0 L526.4,528.2 L526.9,529.5 L527.4,530.8 L527.9,525.1 L528.4,519.4 L529.0,513.6 L529.5,507.9 L530.0,502.2 L530.5,496.5 L531.1,499.5 L531.8,502.5 L532.4,505.5 L533.0,509.7 L533.7,513.9 L534.3,518.1 L534.8,518.1 L535.4,518.1 L535.9,518.1 L536.4,518.1 L537.0,516.5 L537.5,514.9 L538.0,513.3 L538.6,511.7 L539.1,511.8 L539.6,511.8 L540.2,511.8 L540.7,511.8 L541.3,512.4 L542.0,513.0 L542.6,513.5 L543.2,513.3 L543.9,513.0 L544.5,512.7 L545.1,512.7 L545.8,512.8 L546.4,512.8 L547.0,512.5 L547.7,512.1 L548.3,511.8 L548.8,513.9 L549.3,515.9 L549.8,518.0 L550.3,520.0 L550.8,522.1 L551.4,522.3 L551.9,522.5 L552.4,522.7 L552.9,523.0 L553.4,523.2 L554.0,528.1 L554.7,533.0 L555.3,536.5ZM603.0,536.5 L603.0,535.4 L603.5,533.7 L604.0,532.0 L604.5,530.3 L605.0,528.7 L605.5,527.0 L606.0,527.2 L606.5,527.4 L607.0,527.6 L607.5,527.8 L608.0,528.0 L608.5,527.5 L609.0,527.1 L609.5,526.6 L610.0,526.2 L610.5,525.7 L611.1,531.5 L611.8,536.5ZM612.3,536.5 L612.3,536.3 L612.9,535.5 L613.4,534.6 L613.9,533.7 L614.5,532.3 L615.0,531.0 L615.5,529.6 L616.1,528.2 L616.6,527.0 L617.1,525.7 L617.7,524.5 L618.2,523.2 L618.7,528.3 L619.2,533.4 L619.7,536.5ZM626.3,536.5 L626.3,535.6 L626.8,534.1 L627.4,532.5 L627.9,531.0 L628.4,530.1 L629.0,529.2 L629.5,528.4 L630.0,527.5 L630.5,526.4 L631.0,525.3 L631.6,524.3 L632.1,523.2 L632.7,524.5 L633.4,525.8 L634.0,527.0 L634.7,526.5 L635.3,526.0 L636.0,525.5 L636.6,527.0 L637.2,528.4 L637.9,529.9 L638.5,529.3 L639.2,528.8 L639.8,528.3 L640.4,528.6 L641.1,528.9 L641.7,529.2 L642.3,533.1 L643.0,536.5ZM649.4,536.5 L649.4,536.5 L649.9,535.9 L650.4,535.0 L651.0,534.2 L651.5,533.3 L652.0,532.5 L652.6,530.8 L653.1,529.0 L653.6,527.3 L654.2,525.6 L654.7,525.6 L655.2,525.6 L655.8,525.7 L656.3,525.7 L656.8,531.8 L657.3,536.5ZM664.6,536.5 L664.6,532.5 L665.2,531.1 L665.9,529.7 L666.5,528.3 L667.1,531.2 L667.8,534.1 L668.4,536.5ZM698.7,536.5 L698.7,534.5 L699.2,531.6 L699.7,529.8 L700.2,527.9 L700.8,526.1 L701.3,524.2 L701.8,522.7 L702.3,521.2 L702.8,519.6 L703.3,518.1 L703.8,521.7 L704.3,525.2 L704.8,528.8 L705.3,532.3 L705.8,535.9 L706.4,535.6 L707.1,535.3 L707.8,535.0 L708.4,532.3 L709.1,529.7 L709.7,527.0 L710.3,528.8 L711.0,530.7 L711.6,532.5 L712.2,533.6 L712.9,534.7 L713.5,535.8 L714.1,536.5ZM764.6,536.5 L764.6,529.9 L765.2,523.2 L765.7,521.9 L766.2,520.6 L766.8,519.4 L767.3,518.1 L767.8,516.8 L768.4,518.1 L769.1,519.4 L769.7,520.7 L770.3,521.5 L771.0,522.4 L771.6,523.2 L772.2,525.2 L772.9,527.1 L773.5,529.1 L774.1,532.2 L774.8,535.3 L775.4,536.5ZM834.6,536.5 L834.6,536.3 L835.1,534.6 L835.7,536.5ZM1096.3,536.5 L1096.3,536.1 L1096.8,535.6 L1097.3,535.1 L1097.8,534.6 L1098.3,534.6 L1098.9,534.6 L1099.4,534.6 L1099.9,534.6 L1100.5,532.7 L1101.0,530.8 L1101.5,528.9 L1102.1,526.9 L1102.6,528.2 L1103.1,529.5 L1103.7,530.8 L1104.2,532.1 L1104.7,534.7 L1105.2,536.5ZM1386.4,536.5 L1386.4,536.1 L1387.0,534.5 L1387.6,532.3 L1388.2,530.1 L1388.7,527.9 L1389.3,525.7 L1389.8,529.1 L1390.3,532.5 L1390.8,535.9 L1391.3,536.5ZM1407.3,536.5 L1407.3,536.2 L1407.8,535.1 L1408.3,534.0 L1408.8,533.0 L1409.4,531.5 L1409.9,530.1 L1410.4,528.6 L1410.9,527.2 L1411.4,525.7 L1411.9,526.5 L1412.4,527.3 L1412.9,528.1 L1413.4,528.9 L1414.0,529.7 L1414.5,531.0 L1415.0,532.2 L1415.5,533.4 L1416.0,534.7 L1416.5,535.9 L1417.1,536.5ZM1422.2,536.5 L1422.2,535.9 L1422.8,536.5ZM1469.3,536.5 L1469.3,534.1 L1469.8,529.6 L1470.3,532.8 L1470.8,536.1 L1471.3,536.5Z" fill="url(#gg)"/><path d="M111.5,626.5 L111.5,627.6 L112.0,630.1 L112.6,632.5 L113.1,635.0 L113.6,631.7 L114.1,628.3 L114.6,626.5ZM207.1,626.5 L207.1,627.4 L207.8,631.2 L208.4,635.0 L208.9,632.4 L209.4,629.8 L209.9,627.1 L210.4,626.5ZM215.5,626.5 L215.5,626.6 L216.1,630.2 L216.6,634.0 L217.1,637.7 L217.6,641.5 L218.1,645.2 L218.6,649.0 L219.1,646.3 L219.6,643.6 L220.1,640.8 L220.6,638.1 L221.1,635.4 L221.6,633.8 L222.1,632.2 L222.6,630.6 L223.1,629.0 L223.6,627.4 L224.1,626.5ZM238.9,626.5 L238.9,627.4 L239.4,626.5ZM356.1,626.5 L356.1,626.8 L356.7,628.7 L357.2,626.5ZM363.7,626.5 L363.7,626.8 L364.3,633.3 L365.0,639.9 L365.6,646.5 L366.1,643.5 L366.6,640.6 L367.1,637.6 L367.6,634.7 L368.1,631.7 L368.7,629.6 L369.2,627.4 L369.7,626.5ZM873.6,626.5 L873.6,626.6 L874.1,627.2 L874.6,628.2 L875.1,629.3 L875.7,630.3 L876.2,631.3 L876.7,632.6 L877.2,633.8 L877.8,635.1 L878.3,636.3 L878.9,631.7 L879.6,627.1 L880.2,626.5ZM1001.6,626.5 L1001.6,628.0 L1002.2,631.0 L1002.8,632.4 L1003.5,633.7 L1004.1,635.0 L1004.6,636.6 L1005.1,638.2 L1005.6,639.8 L1006.1,641.4 L1006.6,643.8 L1007.2,646.2 L1007.7,648.7 L1008.2,651.1 L1008.7,652.8 L1009.2,654.5 L1009.7,656.3 L1010.2,658.0 L1010.7,658.2 L1011.2,658.5 L1011.7,658.7 L1012.2,658.9 L1012.7,659.1 L1013.2,659.4 L1013.7,659.6 L1014.2,659.9 L1014.7,660.1 L1015.2,660.4 L1015.9,660.8 L1016.5,661.2 L1017.2,661.6 L1017.8,663.8 L1018.5,665.9 L1019.1,668.1 L1019.6,660.7 L1020.1,653.3 L1020.6,646.0 L1021.1,638.6 L1021.6,631.2 L1022.2,629.2 L1022.9,627.1 L1023.5,626.5ZM1026.7,626.5 L1026.7,628.4 L1027.3,630.7 L1027.9,633.4 L1028.6,636.1 L1029.2,638.8 L1029.7,636.7 L1030.3,634.6 L1030.8,632.5 L1031.3,630.4 L1031.9,628.0 L1032.4,626.5ZM1053.4,626.5 L1053.4,629.9 L1054.0,626.9 L1054.7,626.5ZM1156.3,626.5 L1156.3,627.1 L1156.9,629.5 L1157.5,630.6 L1158.2,631.7 L1158.8,632.8 L1159.4,633.6 L1160.1,634.5 L1160.7,635.3 L1161.3,637.3 L1162.0,639.4 L1162.6,641.4 L1163.1,639.3 L1163.6,637.1 L1164.1,635.0 L1164.6,632.9 L1165.2,630.7 L1165.7,628.8 L1166.2,626.8 L1166.7,626.5ZM1256.7,626.5 L1256.7,627.4 L1257.2,626.5ZM1285.0,626.5 L1285.0,626.7 L1285.5,629.7 L1286.1,632.0 L1286.6,634.4 L1287.1,636.7 L1287.6,639.1 L1288.1,641.4 L1288.7,638.2 L1289.4,634.9 L1290.0,631.7 L1290.6,628.5 L1291.3,626.5ZM1451.5,626.5 L1451.5,627.2 L1452.0,629.9 L1452.5,629.1 L1453.1,628.3 L1453.6,627.5 L1454.1,626.8 L1454.7,626.5Z" fill="url(#rg)"/><path d="M11.4,579.0 L13.3,587.2 L15.2,592.0 L17.1,601.3 L19.0,609.6 L21.1,615.3 L23.3,612.4 L25.4,617.2 L27.5,599.6 L29.7,581.2 L31.8,565.1 L34.3,570.3 L36.8,571.5 L39.3,553.9 L41.9,540.5 L44.0,543.9 L46.2,555.5 L48.3,561.3 L50.8,557.4 L53.4,555.0 L55.3,559.4 L57.2,565.1 L59.8,558.5 L62.3,547.3 L64.2,543.8 L66.2,543.2 L68.1,542.3 L71.2,563.9 L73.1,573.7 L75.0,582.9 L77.5,576.8 L80.0,568.9 L82.1,575.4 L84.3,586.4 L86.4,591.8 L88.5,595.3 L90.7,588.4 L92.8,588.0 L94.7,598.6 L96.6,596.9 L98.5,611.0 L100.4,614.7 L102.5,612.3 L104.6,611.6 L106.7,609.6 L108.8,617.3 L111.0,625.2 L113.1,635.0 L115.7,618.4 L118.2,607.1 L120.1,603.1 L122.0,600.7 L124.5,609.1 L127.1,612.1 L129.2,603.9 L131.3,590.2 L133.4,580.4 L135.9,586.3 L138.5,594.4 L140.4,586.6 L142.3,581.7 L144.2,576.6 L146.1,580.4 L148.0,575.5 L149.9,571.5 L151.8,582.5 L153.7,593.1 L155.8,589.9 L158.0,586.7 L160.1,586.7 L162.2,596.7 L164.4,602.7 L166.5,608.3 L168.7,598.4 L170.9,594.5 L173.1,582.2 L175.3,576.6 L177.4,583.0 L179.6,584.7 L181.7,591.8 L183.8,588.4 L186.0,587.8 L188.1,584.2 L190.6,596.6 L193.1,607.1 L195.0,603.8 L196.9,594.5 L198.9,594.2 L200.8,585.5 L202.7,600.7 L204.6,610.2 L206.5,623.6 L208.4,635.0 L210.9,621.9 L213.5,612.1 L216.1,630.2 L218.6,649.0 L221.1,635.4 L223.6,627.4 L225.7,621.7 L227.9,616.0 L230.0,609.6 L231.8,616.0 L233.6,618.7 L235.3,622.0 L237.1,623.1 L238.9,627.4 L241.4,611.0 L244.0,595.6 L246.2,601.0 L248.3,608.3 L250.5,609.8 L252.7,620.0 L254.8,611.1 L256.9,595.7 L258.9,587.4 L261.0,578.0 L263.1,579.9 L265.2,581.7 L267.1,580.9 L269.0,585.8 L271.0,582.4 L272.9,582.9 L275.4,595.6 L278.0,586.7 L280.5,608.5 L283.0,623.6 L285.1,618.0 L287.3,606.4 L289.4,599.4 L291.9,592.6 L294.5,584.2 L296.4,599.0 L298.3,608.3 L300.2,591.1 L302.1,575.3 L303.9,572.4 L305.7,568.0 L307.4,566.2 L309.2,562.3 L311.0,560.0 L312.9,565.3 L314.8,570.2 L317.3,543.5 L319.4,547.7 L321.6,550.7 L323.7,549.9 L325.6,554.9 L327.5,559.8 L329.4,566.0 L331.3,568.9 L333.2,575.3 L335.1,580.7 L337.0,592.2 L338.9,596.9 L341.4,606.4 L344.0,619.8 L346.6,619.2 L349.1,614.7 L351.0,616.2 L352.9,625.6 L354.8,623.0 L356.7,628.7 L359.2,616.5 L361.8,600.7 L363.7,626.8 L365.6,646.5 L368.1,631.7 L370.7,621.0 L372.8,619.1 L375.0,609.1 L377.1,605.8 L379.1,603.1 L381.1,609.4 L383.2,610.3 L385.2,609.5 L387.2,610.9 L389.8,600.5 L392.3,600.7 L394.9,607.6 L397.4,614.7 L399.9,602.6 L402.5,591.8 L405.1,584.0 L407.6,577.8 L410.1,585.5 L412.6,594.4 L414.5,587.4 L416.5,586.9 L418.4,588.7 L420.3,581.7 L422.2,584.6 L424.1,580.3 L426.0,579.2 L427.9,580.4 L429.8,584.7 L431.7,589.6 L433.6,592.4 L435.5,594.4 L437.4,590.3 L439.3,591.5 L441.2,589.9 L443.1,588.0 L445.0,590.7 L447.0,589.9 L448.9,588.1 L450.8,586.7 L452.6,585.7 L454.4,578.7 L456.1,579.3 L457.9,571.6 L459.7,568.9 L462.2,580.5 L464.7,590.5 L466.6,590.1 L468.5,583.9 L470.4,582.1 L472.4,577.5 L474.3,579.3 L476.2,576.6 L478.1,581.2 L480.0,585.4 L481.9,591.9 L483.8,595.6 L485.9,571.2 L488.1,555.8 L490.2,535.9 L492.3,533.1 L494.4,529.4 L496.5,527.0 L499.1,511.5 L501.6,492.7 L503.5,495.2 L505.4,490.2 L508.9,521.9 L511.0,525.6 L513.1,529.2 L515.2,535.9 L517.2,528.9 L519.1,524.5 L521.2,525.1 L523.3,526.5 L525.4,525.7 L527.4,530.8 L530.5,496.5 L532.4,505.5 L534.3,518.1 L536.4,518.1 L538.6,511.7 L540.7,511.8 L542.6,513.5 L544.5,512.7 L546.4,512.8 L548.3,511.8 L550.8,522.1 L553.4,523.2 L555.3,537.9 L557.2,553.7 L559.7,558.8 L562.2,581.3 L564.8,604.5 L566.7,599.8 L568.6,593.1 L570.5,583.5 L572.4,570.2 L574.3,580.7 L576.2,596.9 L578.1,584.8 L580.0,569.9 L582.0,560.1 L583.9,546.1 L585.8,560.4 L587.7,568.9 L590.2,562.1 L592.8,555.0 L594.7,560.5 L596.6,566.4 L598.5,561.7 L600.4,556.2 L603.0,535.4 L605.5,527.0 L608.0,528.0 L610.5,525.7 L611.8,537.2 L613.9,533.7 L616.1,528.2 L618.2,523.2 L620.7,548.6 L623.2,542.1 L625.8,537.2 L627.9,531.0 L630.0,527.5 L632.1,523.2 L634.0,527.0 L636.0,525.5 L637.9,529.9 L639.8,528.3 L641.7,529.2 L643.6,541.0 L645.7,538.3 L647.8,538.2 L649.9,535.9 L652.0,532.5 L654.2,525.6 L656.3,525.7 L658.8,556.2 L660.7,547.8 L662.6,544.9 L664.6,532.5 L666.5,528.3 L668.4,537.0 L670.3,549.9 L672.8,545.7 L675.3,546.1 L677.9,561.3 L680.5,557.6 L683.0,556.2 L685.5,567.1 L688.1,575.3 L690.6,566.4 L693.1,555.0 L695.1,543.3 L697.2,543.3 L699.2,531.6 L701.3,524.2 L703.3,518.1 L705.8,535.9 L707.8,535.0 L709.7,527.0 L711.6,532.5 L713.5,535.8 L715.4,542.8 L717.3,548.3 L719.2,553.5 L721.1,561.3 L723.7,553.0 L726.2,546.1 L728.1,551.8 L730.0,554.5 L731.9,554.6 L733.8,567.3 L735.7,563.1 L737.6,569.0 L739.5,564.1 L741.4,558.8 L743.2,565.2 L745.0,573.1 L746.7,577.1 L748.5,585.1 L750.3,590.5 L752.2,586.7 L754.1,574.0 L757.6,561.3 L759.5,564.7 L761.4,567.7 L763.3,543.2 L765.2,523.2 L767.8,516.8 L769.7,520.7 L771.6,523.2 L773.5,529.1 L775.4,538.4 L776.7,581.7 L778.6,576.5 L780.5,572.8 L783.0,578.9 L785.6,584.2 L787.5,581.7 L789.4,577.8 L792.0,584.2 L794.5,591.8 L797.0,588.5 L799.6,581.7 L801.7,572.0 L803.8,560.3 L805.9,553.7 L808.0,561.5 L810.2,564.8 L812.3,571.5 L814.2,577.9 L816.1,579.1 L818.1,570.1 L820.1,565.1 L822.2,556.9 L824.2,542.9 L826.2,541.0 L828.1,545.4 L830.0,556.2 L832.5,543.0 L835.1,534.6 L837.0,550.9 L838.9,561.3 L840.8,560.5 L842.8,569.6 L844.7,573.1 L846.6,574.0 L848.5,581.4 L850.4,586.7 L852.3,585.0 L854.2,580.4 L856.8,589.5 L859.3,600.7 L861.1,593.1 L862.9,585.9 L864.6,578.7 L866.4,571.7 L868.2,562.6 L870.1,593.3 L872.0,624.9 L874.1,627.2 L876.2,631.3 L878.3,636.3 L880.2,622.6 L882.1,607.1 L884.7,608.6 L887.2,617.2 L889.8,605.7 L892.3,599.4 L894.2,597.9 L896.1,597.0 L898.0,597.0 L899.9,596.9 L902.5,581.7 L904.4,570.3 L906.3,570.2 L908.2,572.4 L910.1,575.4 L912.0,580.5 L913.9,581.7 L916.5,562.3 L919.0,551.2 L921.5,558.8 L924.1,567.7 L926.7,570.0 L929.2,570.2 L931.3,582.7 L933.4,595.6 L935.5,604.5 L937.4,601.0 L939.3,593.1 L941.4,596.4 L943.6,605.4 L945.7,609.6 L947.6,595.9 L949.5,581.9 L951.4,573.8 L953.3,557.5 L955.4,575.7 L957.6,594.7 L959.7,616.0 L961.5,608.3 L963.3,600.5 L965.0,597.5 L966.8,589.4 L968.6,581.7 L971.1,585.3 L973.6,582.9 L976.2,589.5 L978.7,594.4 L981.2,586.7 L983.8,581.7 L986.3,583.9 L988.9,581.7 L990.8,579.3 L992.7,578.8 L994.6,578.4 L996.5,577.8 L998.4,600.0 L1000.3,622.0 L1002.2,631.0 L1004.1,635.0 L1006.1,641.4 L1008.2,651.1 L1010.2,658.0 L1012.7,659.1 L1015.2,660.4 L1017.2,661.6 L1019.1,668.1 L1021.6,631.2 L1023.5,625.1 L1025.4,623.6 L1027.3,630.7 L1029.2,638.8 L1031.3,630.4 L1033.5,620.9 L1035.6,610.9 L1038.2,611.3 L1040.7,609.6 L1042.5,610.2 L1044.3,609.7 L1046.0,612.0 L1047.8,609.5 L1049.6,612.1 L1051.5,618.2 L1053.4,629.9 L1055.3,620.9 L1057.2,613.4 L1059.7,626.1 L1061.5,615.2 L1063.3,609.2 L1065.0,600.9 L1066.8,593.4 L1068.6,586.7 L1071.2,589.8 L1073.7,593.1 L1076.2,585.7 L1078.8,581.7 L1081.3,584.6 L1083.9,589.3 L1085.8,564.7 L1087.7,547.3 L1090.2,545.7 L1092.8,543.5 L1095.3,537.2 L1097.8,534.6 L1099.9,534.6 L1102.1,526.9 L1104.2,532.1 L1106.8,545.0 L1109.3,561.3 L1111.8,555.5 L1114.4,548.6 L1116.3,551.7 L1118.2,564.4 L1120.1,573.6 L1122.0,581.7 L1124.5,583.2 L1127.1,584.2 L1128.9,575.2 L1130.7,573.0 L1132.4,567.0 L1134.2,558.8 L1136.0,555.0 L1138.1,559.5 L1140.2,560.8 L1142.3,563.9 L1144.8,581.7 L1147.4,599.4 L1149.3,604.2 L1151.2,612.0 L1153.1,616.8 L1155.0,622.3 L1156.9,629.5 L1158.8,632.8 L1160.7,635.3 L1162.6,641.4 L1165.2,630.7 L1167.7,621.0 L1170.2,603.3 L1172.8,581.7 L1175.3,582.2 L1177.9,584.2 L1180.5,579.9 L1183.0,574.0 L1185.0,578.7 L1187.0,580.7 L1189.1,579.7 L1191.1,588.5 L1193.1,591.8 L1195.0,588.1 L1196.9,583.8 L1198.9,577.8 L1200.8,575.3 L1202.9,585.9 L1205.0,591.1 L1207.1,599.4 L1209.0,604.1 L1210.9,610.0 L1212.8,618.3 L1214.7,623.6 L1216.7,609.2 L1218.6,599.4 L1220.5,600.1 L1222.4,609.4 L1224.3,610.8 L1226.2,610.9 L1228.1,616.9 L1230.0,618.5 L1231.9,603.0 L1233.8,581.7 L1235.7,590.6 L1237.6,596.9 L1240.2,576.6 L1242.1,583.8 L1244.0,598.2 L1246.1,593.5 L1248.2,586.4 L1250.3,576.6 L1252.2,587.8 L1254.1,596.9 L1256.7,627.4 L1258.9,612.1 L1261.5,612.4 L1264.0,621.0 L1266.5,617.9 L1269.1,609.6 L1271.0,606.2 L1272.9,596.9 L1275.5,592.7 L1278.0,590.5 L1280.5,602.9 L1283.0,614.7 L1285.5,629.7 L1288.1,641.4 L1290.0,631.7 L1291.9,622.3 L1294.5,622.7 L1297.0,618.5 L1299.6,591.8 L1302.1,591.3 L1304.6,590.5 L1307.2,586.3 L1309.7,579.1 L1311.6,585.6 L1313.5,591.8 L1315.4,582.9 L1317.3,580.4 L1319.8,580.8 L1322.4,585.5 L1324.3,590.9 L1326.2,582.9 L1328.0,582.0 L1329.8,582.7 L1331.5,580.8 L1333.3,580.5 L1335.1,575.3 L1336.9,579.0 L1338.7,579.1 L1340.4,583.0 L1342.2,581.4 L1344.0,588.0 L1346.5,581.9 L1349.1,576.6 L1351.2,577.7 L1353.4,570.3 L1355.5,574.0 L1357.4,579.5 L1359.3,584.2 L1361.2,579.6 L1363.1,571.5 L1365.7,582.6 L1368.2,588.0 L1370.1,592.4 L1372.0,600.7 L1373.9,576.5 L1375.8,555.0 L1377.7,555.4 L1379.6,563.9 L1382.2,550.3 L1384.7,541.0 L1387.0,534.5 L1389.3,525.7 L1392.3,546.1 L1394.8,554.3 L1397.4,553.7 L1399.3,565.3 L1401.2,581.7 L1403.8,563.0 L1406.3,538.4 L1408.8,533.0 L1411.4,525.7 L1414.0,529.7 L1416.5,535.9 L1418.4,543.8 L1420.3,542.3 L1422.2,535.9 L1424.1,540.2 L1426.0,539.8 L1427.9,538.4 L1430.4,570.2 L1433.0,567.2 L1435.5,555.0 L1437.4,565.8 L1439.3,568.9 L1441.4,580.5 L1443.6,582.8 L1445.7,589.3 L1447.8,604.9 L1449.9,619.3 L1452.0,629.9 L1454.1,626.8 L1456.3,622.2 L1458.4,617.2 L1461.0,604.1 L1463.5,591.8 L1465.6,570.2 L1467.7,547.7 L1469.8,529.6 L1472.3,545.8 L1474.9,553.7 L1477.5,562.3 L1480.0,572.8 L1481.9,583.0 L1483.8,602.0 L1485.7,605.1 L1487.6,607.1 L1489.7,603.6 L1491.9,600.7 L1494.0,596.9 L1495.9,604.0 L1497.8,603.3" stroke="#8666cc" stroke-width="1.0" fill="none" stroke-linejoin="round"/><path d="M11.4,552.4 L12.1,554.1 L13.0,556.4 L14.0,559.1 L15.2,562.1 L16.5,565.2 L17.8,568.4 L19.1,571.3 L20.3,574.0 L21.3,576.0 L22.3,578.1 L23.3,580.3 L24.4,582.4 L25.5,584.4 L26.5,586.3 L27.6,588.1 L28.6,589.6 L29.6,590.9 L30.5,591.8 L31.7,592.7 L32.7,593.2 L33.7,593.2 L34.6,592.9 L35.6,592.1 L36.8,590.9 L38.1,589.3 L39.0,588.1 L39.9,586.5 L40.9,584.8 L42.0,582.8 L43.0,580.7 L44.1,578.5 L45.3,576.2 L46.4,574.0 L47.5,571.9 L48.6,569.8 L49.7,568.0 L50.8,566.4 L51.9,565.0 L52.9,563.6 L54.0,562.3 L55.1,561.0 L56.2,559.8 L57.3,558.7 L58.4,557.7 L59.5,556.8 L60.5,556.0 L61.5,555.3 L62.5,554.7 L63.5,554.2 L64.6,553.8 L65.7,553.6 L66.7,553.6 L67.8,553.7 L68.8,554.0 L69.7,554.3 L70.7,554.7 L71.7,555.2 L72.7,555.7 L73.7,556.2 L74.7,556.6 L75.6,557.1 L76.5,557.5 L77.4,557.9 L78.3,558.4 L79.3,559.1 L80.3,559.9 L81.4,561.0 L82.6,562.3 L83.9,563.9 L84.8,565.0 L85.7,566.3 L86.6,567.7 L87.6,569.1 L88.7,570.7 L89.7,572.4 L90.8,574.1 L91.9,575.9 L93.0,577.7 L94.2,579.5 L95.3,581.4 L96.4,583.2 L97.5,585.0 L98.6,586.8 L99.7,588.5 L100.7,590.2 L101.7,591.8 L102.8,593.6 L103.9,595.5 L105.0,597.4 L106.1,599.3 L107.1,601.3 L108.2,603.2 L109.3,605.1 L110.3,606.9 L111.3,608.7 L112.3,610.3 L113.3,611.9 L114.2,613.3 L115.1,614.6 L116.0,615.6 L116.9,616.5 L118.1,617.5 L119.2,618.1 L120.2,618.4 L121.1,618.5 L122.0,618.3 L122.9,617.8 L123.8,617.3 L124.8,616.5 L125.9,615.6 L127.1,614.7 L128.0,614.0 L128.9,613.1 L129.9,612.1 L130.9,611.0 L132.0,609.7 L133.1,608.5 L134.2,607.1 L135.2,605.8 L136.3,604.4 L137.4,603.0 L138.5,601.7 L139.5,600.4 L140.5,599.1 L141.4,598.0 L142.3,596.9 L143.5,595.4 L144.7,593.9 L145.7,592.4 L146.7,591.0 L147.7,589.6 L148.7,588.3 L149.6,587.2 L150.5,586.2 L151.5,585.3 L152.5,584.7 L153.5,584.3 L154.5,584.0 L155.5,584.0 L156.4,584.1 L157.4,584.3 L158.4,584.6 L159.4,584.9 L160.4,585.3 L161.5,585.8 L162.6,586.2 L163.6,586.6 L164.5,587.1 L165.5,587.8 L166.5,588.5 L167.4,589.2 L168.5,589.9 L169.5,590.6 L170.6,591.3 L171.7,591.9 L172.9,592.4 L174.1,592.8 L175.3,593.1 L176.2,593.2 L177.2,593.2 L178.2,593.2 L179.3,593.1 L180.4,592.9 L181.5,592.7 L182.6,592.5 L183.8,592.3 L184.9,592.0 L186.1,591.8 L187.2,591.5 L188.3,591.3 L189.3,591.0 L190.3,590.8 L191.3,590.7 L192.2,590.6 L193.1,590.5 L194.4,590.4 L195.6,590.2 L196.6,590.0 L197.6,589.8 L198.5,589.7 L199.4,589.7 L200.3,589.9 L201.2,590.3 L202.2,590.9 L203.3,591.8 L204.3,592.8 L205.3,594.1 L206.3,595.6 L207.3,597.2 L208.4,598.9 L209.5,600.8 L210.6,602.7 L211.7,604.7 L212.8,606.6 L213.9,608.5 L214.9,610.4 L216.0,612.1 L217.1,613.8 L218.1,615.7 L219.2,617.6 L220.3,619.5 L221.4,621.5 L222.5,623.4 L223.6,625.2 L224.7,626.9 L225.7,628.4 L226.7,629.7 L227.7,630.9 L228.7,631.7 L229.8,632.4 L230.9,632.7 L231.9,632.8 L232.8,632.7 L233.8,632.4 L234.8,631.9 L235.7,631.2 L236.7,630.4 L237.8,629.6 L238.9,628.7 L239.9,627.9 L240.9,626.9 L241.9,625.8 L242.9,624.6 L244.0,623.3 L245.0,621.9 L246.1,620.5 L247.2,619.0 L248.3,617.6 L249.4,616.2 L250.5,614.8 L251.6,613.4 L252.6,612.2 L253.7,610.9 L254.7,609.6 L255.8,608.2 L256.9,606.9 L257.9,605.6 L259.0,604.2 L260.1,602.9 L261.1,601.6 L262.2,600.4 L263.2,599.2 L264.2,598.0 L265.2,596.9 L266.3,595.6 L267.4,594.2 L268.5,592.8 L269.5,591.5 L270.6,590.2 L271.6,588.9 L272.6,587.8 L273.6,586.9 L274.6,586.2 L275.7,585.7 L276.7,585.5 L277.7,585.6 L278.8,586.1 L279.8,586.9 L280.8,587.9 L281.8,589.0 L282.8,590.2 L283.9,591.5 L284.9,592.7 L285.9,593.9 L287.0,594.8 L288.1,595.6 L289.1,596.2 L290.1,596.8 L291.2,597.5 L292.2,598.1 L293.3,598.7 L294.4,599.2 L295.4,599.7 L296.5,600.0 L297.6,600.1 L298.7,600.1 L299.7,599.9 L300.8,599.4 L301.9,598.7 L302.9,597.7 L304.0,596.5 L305.1,595.1 L306.2,593.6 L307.2,592.0 L308.3,590.3 L309.4,588.5 L310.4,586.7 L311.5,585.0 L312.5,583.3 L313.5,581.7 L314.6,580.0 L315.7,578.1 L316.8,576.1 L317.9,574.1 L319.0,572.1 L320.1,570.2 L321.2,568.3 L322.2,566.6 L323.2,565.0 L324.1,563.7 L325.0,562.6 L326.3,561.4 L327.5,560.6 L328.5,560.2 L329.5,560.1 L330.5,560.2 L331.5,560.4 L332.6,560.8 L333.7,561.2 L334.7,561.6 L335.7,562.1 L336.7,562.9 L337.7,564.0 L338.9,565.6 L340.2,567.7 L341.1,569.4 L342.1,571.5 L343.2,573.8 L344.3,576.3 L345.4,579.0 L346.5,581.8 L347.6,584.5 L348.7,587.2 L349.8,589.8 L350.8,592.2 L351.7,594.4 L353.0,597.5 L354.2,600.4 L355.2,603.2 L356.2,605.8 L357.2,608.1 L358.2,610.2 L359.3,612.1 L360.4,613.6 L361.4,614.9 L362.5,615.8 L363.6,616.6 L364.6,617.3 L365.7,617.9 L366.9,618.5 L367.9,619.1 L368.9,619.6 L370.0,620.1 L371.0,620.5 L372.1,620.9 L373.3,621.1 L374.5,621.1 L375.8,621.0 L376.7,620.8 L377.7,620.5 L378.7,620.1 L379.7,619.7 L380.8,619.2 L381.8,618.6 L382.9,618.0 L384.0,617.4 L385.1,616.8 L386.3,616.1 L387.4,615.4 L388.5,614.7 L389.5,614.1 L390.4,613.5 L391.4,612.8 L392.4,612.1 L393.5,611.4 L394.5,610.7 L395.5,609.9 L396.5,609.2 L397.5,608.4 L398.6,607.6 L399.6,606.8 L400.6,606.1 L401.5,605.3 L402.5,604.5 L403.6,603.6 L404.7,602.6 L405.7,601.7 L406.7,600.7 L407.8,599.7 L408.8,598.7 L409.8,597.7 L410.8,596.8 L411.9,595.8 L413.0,594.9 L414.1,594.0 L415.2,593.1 L416.1,592.4 L417.1,591.7 L418.1,591.0 L419.1,590.2 L420.2,589.5 L421.2,588.8 L422.3,588.0 L423.3,587.4 L424.4,586.7 L425.4,586.1 L426.5,585.6 L427.5,585.1 L428.5,584.7 L429.5,584.4 L430.4,584.2 L431.5,584.1 L432.7,584.1 L433.8,584.3 L434.8,584.6 L435.9,585.0 L436.9,585.5 L437.9,586.0 L439.0,586.4 L440.0,586.9 L441.0,587.4 L442.0,587.7 L443.1,588.0 L444.2,588.2 L445.2,588.5 L446.3,588.7 L447.4,588.9 L448.5,589.1 L449.6,589.3 L450.7,589.4 L451.8,589.5 L452.8,589.6 L453.8,589.6 L454.8,589.5 L455.8,589.3 L456.9,588.9 L458.0,588.4 L459.0,587.8 L459.9,587.0 L460.9,586.3 L461.9,585.5 L462.8,584.7 L463.8,584.0 L464.9,583.4 L466.0,582.9 L467.0,582.6 L468.0,582.4 L469.1,582.2 L470.2,582.0 L471.4,581.9 L472.5,581.8 L473.6,581.8 L474.8,581.7 L475.8,581.7 L476.8,581.7 L477.8,581.7 L478.7,581.7 L480.0,582.0 L481.2,582.7 L482.2,583.5 L483.1,584.2 L484.1,584.5 L485.1,584.2 L486.3,582.9 L487.2,581.3 L488.2,579.3 L489.3,576.8 L490.3,574.0 L491.4,571.0 L492.5,567.9 L493.5,564.7 L494.6,561.7 L495.6,558.8 L496.5,556.2 L497.8,552.7 L499.0,549.3 L500.2,546.0 L501.3,542.8 L502.3,539.8 L503.3,537.0 L504.1,534.6 L505.5,530.3 L506.4,527.2 L507.6,524.5 L508.5,523.1 L509.5,521.7 L510.5,520.5 L511.7,519.3 L512.8,518.4 L514.0,517.6 L515.0,517.1 L516.1,516.7 L517.2,516.5 L518.3,516.4 L519.4,516.4 L520.5,516.5 L521.6,516.8 L522.7,517.4 L523.7,518.3 L524.8,519.4 L525.9,520.6 L526.9,521.6 L528.0,522.3 L529.2,522.7 L530.2,522.6 L531.2,522.3 L532.3,521.8 L533.3,521.2 L534.4,520.4 L535.6,519.6 L536.8,518.8 L538.1,518.1 L539.0,517.6 L540.0,516.9 L541.1,516.2 L542.1,515.4 L543.2,514.6 L544.4,513.8 L545.5,513.1 L546.6,512.5 L547.7,512.0 L548.8,511.7 L549.8,511.6 L550.8,511.8 L551.9,512.3 L553.0,513.1 L554.1,514.1 L555.2,515.3 L556.2,516.8 L557.2,518.3 L558.2,520.0 L559.2,521.9 L560.1,523.7 L561.0,525.7 L562.2,528.7 L563.3,532.0 L564.3,535.6 L565.3,539.4 L566.3,543.3 L567.4,547.3 L568.6,551.2 L569.5,554.1 L570.5,557.3 L571.6,560.6 L572.6,564.1 L573.7,567.5 L574.8,570.7 L575.8,573.8 L576.9,576.5 L577.9,578.7 L578.8,580.4 L580.0,581.9 L581.1,582.6 L582.1,582.6 L583.1,582.1 L584.1,581.2 L585.2,580.2 L586.4,579.1 L587.3,578.3 L588.2,577.3 L589.2,576.1 L590.2,574.8 L591.2,573.5 L592.2,572.0 L593.3,570.6 L594.4,569.1 L595.5,567.7 L596.6,566.4 L597.6,565.4 L598.5,564.3 L599.5,563.3 L600.6,562.4 L601.6,561.4 L602.6,560.4 L603.7,559.4 L604.8,558.3 L605.9,557.2 L607.0,556.1 L608.1,554.9 L609.3,553.7 L610.2,552.6 L611.2,551.5 L612.2,550.2 L613.2,549.0 L614.2,547.6 L615.3,546.3 L616.3,544.9 L617.3,543.6 L618.4,542.3 L619.4,541.0 L620.5,539.8 L621.5,538.6 L622.5,537.6 L623.5,536.7 L624.5,535.9 L625.5,535.2 L626.5,534.6 L627.5,534.1 L628.5,533.6 L629.5,533.3 L630.5,533.0 L631.4,532.8 L632.4,532.6 L633.4,532.5 L634.4,532.4 L635.4,532.3 L636.4,532.3 L637.4,532.2 L638.5,532.1 L639.5,532.0 L640.5,532.0 L641.5,532.0 L642.6,532.0 L643.7,532.0 L644.8,532.1 L645.9,532.1 L647.0,532.2 L648.1,532.3 L649.2,532.4 L650.2,532.5 L651.3,532.7 L652.3,532.9 L653.2,533.0 L654.1,533.2 L655.0,533.4 L656.3,533.7 L657.4,534.1 L658.4,534.6 L659.4,535.1 L660.3,535.6 L661.2,536.1 L662.2,536.7 L663.1,537.3 L664.1,537.8 L665.2,538.4 L666.2,538.9 L667.2,539.3 L668.2,539.8 L669.2,540.2 L670.3,540.6 L671.4,541.1 L672.5,541.6 L673.6,542.1 L674.7,542.7 L675.8,543.4 L676.8,544.0 L677.9,544.8 L679.0,545.7 L680.1,546.7 L681.2,547.7 L682.3,548.9 L683.4,550.1 L684.5,551.3 L685.6,552.5 L686.6,553.7 L687.7,554.8 L688.7,555.8 L689.7,556.7 L690.6,557.5 L691.9,558.5 L693.2,559.3 L694.3,560.1 L695.5,560.7 L696.5,561.1 L697.5,561.4 L698.5,561.4 L699.5,561.3 L700.7,560.8 L701.6,559.8 L702.6,558.6 L703.5,557.1 L704.6,555.4 L705.8,553.7 L706.7,552.5 L707.6,551.2 L708.6,549.7 L709.6,548.1 L710.7,546.6 L711.7,545.0 L712.8,543.6 L713.9,542.3 L715.0,541.3 L716.0,540.5 L717.0,540.0 L718.0,539.6 L718.9,539.3 L719.8,539.2 L720.8,539.3 L721.8,539.4 L722.8,539.7 L723.8,540.2 L725.0,540.8 L726.2,541.5 L727.1,542.1 L728.0,542.8 L729.0,543.6 L730.0,544.4 L731.0,545.4 L732.0,546.4 L733.1,547.4 L734.2,548.5 L735.3,549.6 L736.3,550.7 L737.4,551.9 L738.4,553.0 L739.5,554.1 L740.4,555.2 L741.4,556.2 L742.6,557.5 L743.7,558.9 L744.9,560.3 L746.1,561.8 L747.2,563.2 L748.3,564.7 L749.4,566.1 L750.4,567.4 L751.4,568.6 L752.4,569.8 L753.3,570.7 L754.1,571.5 L755.5,572.6 L756.6,573.3 L757.5,573.7 L758.3,573.6 L759.2,573.3 L760.2,572.8 L761.2,572.1 L762.2,571.2 L763.3,570.1 L764.4,568.8 L765.5,567.3 L766.6,565.7 L767.8,563.9 L768.8,562.0 L769.9,559.8 L770.9,557.2 L772.0,554.6 L773.1,552.2 L774.3,550.0 L775.5,548.3 L776.7,547.3 L777.6,546.9 L778.6,546.8 L779.6,546.8 L780.7,547.0 L781.7,547.4 L782.8,548.0 L783.8,548.8 L784.9,549.8 L786.0,550.9 L787.1,552.2 L788.1,553.7 L789.1,555.6 L790.2,557.9 L791.2,560.7 L792.3,563.7 L793.3,566.9 L794.4,570.1 L795.4,573.1 L796.5,576.0 L797.5,578.4 L798.6,580.4 L799.6,581.7 L800.6,582.4 L801.7,582.6 L802.7,582.4 L803.8,581.9 L804.9,581.1 L805.9,580.1 L806.9,579.1 L808.0,578.0 L809.0,576.9 L810.0,576.0 L811.0,575.3 L812.1,574.7 L813.1,574.1 L814.2,573.5 L815.2,572.9 L816.2,572.3 L817.2,571.6 L818.2,571.0 L819.2,570.3 L820.2,569.6 L821.2,568.9 L822.2,568.1 L823.2,567.2 L824.2,566.3 L825.2,565.4 L826.2,564.4 L827.2,563.5 L828.2,562.6 L829.2,561.7 L830.2,560.8 L831.3,560.0 L832.3,559.3 L833.3,558.5 L834.4,557.7 L835.5,556.9 L836.6,556.2 L837.7,555.5 L838.8,554.9 L839.8,554.3 L840.8,554.0 L841.8,553.7 L842.8,553.7 L844.0,553.9 L845.2,554.4 L846.3,555.1 L847.3,556.1 L848.4,557.2 L849.5,558.4 L850.5,559.8 L851.7,561.3 L852.7,562.6 L853.7,564.2 L854.7,565.9 L855.8,567.7 L856.8,569.5 L857.9,571.4 L858.9,573.2 L859.9,574.9 L860.9,576.5 L861.8,577.8 L863.0,579.3 L864.1,580.3 L865.1,581.2 L866.1,582.0 L867.1,582.8 L868.2,583.9 L869.4,585.5 L870.3,586.9 L871.2,588.5 L872.1,590.3 L873.1,592.3 L874.1,594.2 L875.1,596.2 L876.2,598.2 L877.3,600.1 L878.4,601.8 L879.6,603.3 L880.5,604.3 L881.4,605.4 L882.4,606.4 L883.4,607.5 L884.4,608.5 L885.5,609.5 L886.5,610.4 L887.6,611.2 L888.6,612.0 L889.7,612.6 L890.7,613.0 L891.7,613.4 L892.7,613.5 L893.6,613.4 L894.7,613.0 L895.8,612.2 L896.9,611.0 L897.9,609.7 L898.9,608.1 L899.9,606.5 L900.9,604.7 L901.9,602.9 L902.9,601.2 L903.9,599.6 L905.0,598.2 L906.0,597.0 L907.1,595.8 L908.1,594.6 L909.2,593.3 L910.3,592.1 L911.3,591.0 L912.4,589.8 L913.5,588.6 L914.6,587.5 L915.6,586.4 L916.7,585.3 L917.7,584.2 L918.8,583.0 L919.9,581.7 L920.9,580.4 L922.0,579.1 L923.0,577.8 L924.0,576.6 L925.1,575.5 L926.1,574.6 L927.1,573.8 L928.2,573.2 L929.2,572.8 L930.2,572.7 L931.3,572.8 L932.3,573.1 L933.4,573.6 L934.5,574.2 L935.5,575.0 L936.5,575.8 L937.6,576.6 L938.6,577.5 L939.6,578.3 L940.6,579.1 L941.6,580.0 L942.6,581.0 L943.6,582.1 L944.5,583.2 L945.5,584.4 L946.4,585.5 L947.4,586.6 L948.5,587.6 L949.6,588.5 L950.8,589.3 L951.7,589.8 L952.6,590.2 L953.6,590.6 L954.7,591.0 L955.8,591.3 L956.9,591.6 L958.0,591.9 L959.1,592.2 L960.2,592.4 L961.3,592.6 L962.4,592.8 L963.4,592.9 L964.3,593.0 L965.2,593.1 L966.0,593.1 L967.5,592.9 L968.7,592.3 L969.8,591.6 L970.7,590.8 L971.6,590.1 L972.6,589.5 L973.6,589.3 L974.7,589.5 L975.7,590.2 L976.8,591.0 L977.8,591.9 L978.9,592.6 L980.1,593.1 L981.3,593.1 L982.2,592.8 L983.2,592.2 L984.2,591.4 L985.3,590.5 L986.4,589.5 L987.4,588.5 L988.5,587.5 L989.5,586.6 L990.5,586.0 L991.4,585.5 L992.6,585.0 L993.6,584.6 L994.6,584.3 L995.6,584.2 L996.6,584.5 L997.7,585.3 L999.0,586.7 L999.9,588.0 L1000.9,589.6 L1001.9,591.5 L1003.0,593.5 L1004.1,595.8 L1005.1,598.1 L1006.2,600.6 L1007.3,603.0 L1008.3,605.3 L1009.3,607.5 L1010.2,609.6 L1011.5,612.7 L1012.7,615.7 L1013.8,618.7 L1014.8,621.7 L1015.8,624.5 L1016.8,627.3 L1017.8,629.9 L1018.9,632.9 L1020.0,636.0 L1021.0,638.8 L1022.0,641.5 L1023.1,643.6 L1024.1,645.2 L1025.1,646.2 L1026.2,646.6 L1027.2,646.7 L1028.3,646.3 L1029.4,645.6 L1030.5,644.7 L1031.5,643.6 L1032.5,642.1 L1033.5,640.4 L1034.6,638.5 L1035.7,636.5 L1036.9,634.4 L1038.1,632.5 L1039.0,631.1 L1040.0,629.7 L1041.0,628.2 L1042.0,626.6 L1043.0,625.1 L1044.1,623.5 L1045.2,622.1 L1046.2,620.8 L1047.3,619.5 L1048.3,618.5 L1049.3,617.6 L1050.4,616.8 L1051.4,616.1 L1052.5,615.4 L1053.5,614.9 L1054.5,614.5 L1055.5,614.1 L1056.5,613.8 L1057.5,613.6 L1058.4,613.4 L1059.6,613.5 L1060.7,614.0 L1061.7,614.6 L1062.8,615.4 L1063.8,616.0 L1064.9,616.2 L1066.1,616.0 L1067.0,615.5 L1068.0,614.8 L1069.0,613.9 L1070.1,612.9 L1071.2,611.8 L1072.2,610.6 L1073.3,609.4 L1074.3,608.1 L1075.3,606.9 L1076.2,605.8 L1077.4,604.3 L1078.5,603.0 L1079.5,601.6 L1080.6,600.2 L1081.6,598.5 L1082.7,596.6 L1083.9,594.4 L1084.8,592.6 L1085.7,590.6 L1086.7,588.5 L1087.6,586.2 L1088.6,583.8 L1089.7,581.4 L1090.7,578.9 L1091.8,576.4 L1092.9,573.9 L1094.0,571.5 L1095.0,569.4 L1096.0,567.1 L1097.1,564.7 L1098.1,562.3 L1099.2,559.8 L1100.3,557.3 L1101.5,555.0 L1102.6,552.7 L1103.6,550.7 L1104.7,548.9 L1105.7,547.3 L1106.7,546.1 L1107.8,545.0 L1108.9,544.3 L1109.9,543.9 L1111.0,543.8 L1112.0,543.8 L1112.9,544.1 L1113.9,544.6 L1114.9,545.2 L1115.9,545.9 L1116.9,546.6 L1117.9,547.5 L1119.0,548.8 L1120.0,550.3 L1121.1,552.0 L1122.2,553.7 L1123.2,555.5 L1124.2,557.2 L1125.2,558.8 L1126.2,560.2 L1127.1,561.3 L1128.3,562.4 L1129.4,563.2 L1130.4,563.7 L1131.4,564.0 L1132.4,564.3 L1133.5,564.7 L1134.7,565.1 L1135.6,565.4 L1136.6,565.6 L1137.6,565.7 L1138.6,565.8 L1139.6,566.0 L1140.7,566.2 L1141.8,566.5 L1142.8,567.1 L1143.9,567.8 L1144.9,568.9 L1145.9,570.2 L1146.9,571.8 L1147.8,573.5 L1148.8,575.4 L1149.7,577.4 L1150.7,579.6 L1151.7,581.9 L1152.7,584.3 L1153.8,586.8 L1155.0,589.3 L1155.9,591.3 L1156.8,593.4 L1157.8,595.8 L1158.9,598.4 L1159.9,601.0 L1161.0,603.6 L1162.1,606.2 L1163.2,608.8 L1164.2,611.2 L1165.3,613.5 L1166.3,615.5 L1167.2,617.3 L1168.1,618.7 L1169.0,619.8 L1170.3,620.9 L1171.4,621.4 L1172.4,621.2 L1173.4,620.4 L1174.3,619.2 L1175.4,617.6 L1176.5,615.6 L1177.9,613.4 L1178.7,612.0 L1179.6,610.3 L1180.6,608.4 L1181.6,606.2 L1182.7,603.9 L1183.8,601.5 L1184.9,599.0 L1186.0,596.5 L1187.1,594.1 L1188.2,591.7 L1189.2,589.5 L1190.3,587.4 L1191.3,585.6 L1192.2,584.1 L1193.1,582.9 L1194.3,581.6 L1195.4,580.7 L1196.4,580.2 L1197.4,580.0 L1198.4,580.0 L1199.3,580.3 L1200.2,580.8 L1201.2,581.4 L1202.2,582.1 L1203.3,582.9 L1204.3,583.6 L1205.3,584.6 L1206.3,585.7 L1207.3,587.0 L1208.4,588.3 L1209.5,589.8 L1210.6,591.2 L1211.7,592.7 L1212.8,594.2 L1213.9,595.6 L1214.9,597.0 L1216.0,598.2 L1217.1,599.4 L1218.1,600.7 L1219.2,602.1 L1220.2,603.5 L1221.3,604.9 L1222.3,606.2 L1223.4,607.5 L1224.5,608.6 L1225.5,609.5 L1226.6,610.2 L1227.6,610.7 L1228.7,610.9 L1229.8,610.8 L1230.8,610.4 L1231.9,609.7 L1232.9,608.8 L1234.0,607.8 L1235.1,606.6 L1236.1,605.4 L1237.2,604.1 L1238.2,602.8 L1239.3,601.5 L1240.4,600.4 L1241.4,599.4 L1242.5,598.4 L1243.5,597.3 L1244.6,596.2 L1245.7,595.0 L1246.8,593.8 L1247.8,592.7 L1248.9,591.7 L1249.9,590.7 L1251.0,589.9 L1251.9,589.3 L1252.9,588.9 L1253.8,588.8 L1255.1,589.1 L1256.2,589.9 L1257.2,591.2 L1258.2,592.7 L1259.2,594.4 L1260.3,596.2 L1261.4,597.9 L1262.7,599.4 L1263.6,600.4 L1264.7,601.4 L1265.8,602.5 L1266.9,603.7 L1268.0,604.8 L1269.2,606.0 L1270.4,607.1 L1271.5,608.1 L1272.6,609.0 L1273.6,609.8 L1274.6,610.4 L1275.4,610.9 L1276.8,611.2 L1277.9,610.8 L1278.8,610.0 L1279.7,609.1 L1280.7,608.5 L1281.8,608.3 L1282.7,608.6 L1283.7,609.1 L1284.7,609.8 L1285.7,610.6 L1286.8,611.4 L1288.0,612.2 L1289.3,612.9 L1290.7,613.4 L1291.5,613.7 L1292.4,614.0 L1293.3,614.4 L1294.3,614.7 L1295.3,615.2 L1296.3,615.5 L1297.4,615.9 L1298.4,616.2 L1299.5,616.4 L1300.6,616.5 L1301.7,616.5 L1302.8,616.3 L1303.8,616.0 L1304.9,615.4 L1305.9,614.7 L1306.9,613.7 L1308.0,612.4 L1309.0,610.8 L1310.0,609.0 L1311.1,607.1 L1312.1,605.0 L1313.2,602.8 L1314.2,600.7 L1315.3,598.5 L1316.3,596.3 L1317.3,594.3 L1318.3,592.4 L1319.3,590.7 L1320.3,589.2 L1321.2,588.0 L1322.3,586.8 L1323.5,585.8 L1324.6,585.1 L1325.6,584.5 L1326.7,584.1 L1327.7,583.8 L1328.7,583.6 L1329.8,583.4 L1330.8,583.3 L1331.8,583.2 L1332.8,583.1 L1333.9,582.9 L1335.0,582.7 L1336.0,582.6 L1337.1,582.6 L1338.1,582.7 L1339.2,582.7 L1340.2,582.8 L1341.3,582.9 L1342.4,583.0 L1343.4,583.0 L1344.5,583.1 L1345.5,583.0 L1346.6,582.9 L1347.7,582.7 L1348.7,582.4 L1349.8,582.1 L1350.8,581.7 L1351.9,581.3 L1352.9,580.8 L1354.0,580.4 L1355.1,580.0 L1356.1,579.7 L1357.2,579.4 L1358.2,579.2 L1359.3,579.1 L1360.4,579.1 L1361.4,579.3 L1362.5,579.5 L1363.6,579.8 L1364.7,580.2 L1365.8,580.6 L1366.9,580.9 L1368.0,581.3 L1369.0,581.5 L1370.0,581.7 L1371.0,581.8 L1372.0,581.7 L1373.1,581.4 L1374.2,581.1 L1375.3,580.6 L1376.3,580.0 L1377.4,579.4 L1378.4,578.7 L1379.3,577.9 L1380.3,577.0 L1381.2,576.2 L1382.1,575.3 L1383.3,574.0 L1384.5,572.6 L1385.6,571.0 L1386.6,569.4 L1387.7,567.7 L1388.7,565.8 L1389.8,563.9 L1390.9,561.6 L1392.1,558.9 L1393.2,556.0 L1394.3,553.2 L1395.4,550.7 L1396.4,548.6 L1397.4,547.3 L1398.5,547.0 L1399.4,548.0 L1400.2,549.6 L1401.2,551.0 L1402.5,551.7 L1403.3,551.6 L1404.2,551.4 L1405.2,551.0 L1406.2,550.5 L1407.2,549.9 L1408.3,549.3 L1409.4,548.8 L1410.5,548.2 L1411.6,547.7 L1412.6,547.3 L1413.6,547.0 L1414.7,546.7 L1415.8,546.5 L1416.9,546.4 L1418.0,546.2 L1419.1,546.0 L1420.1,545.8 L1421.1,545.6 L1422.0,545.2 L1422.8,544.8 L1424.1,543.4 L1425.0,541.4 L1425.7,539.5 L1426.6,538.1 L1427.9,537.9 L1428.7,538.3 L1429.6,539.0 L1430.6,540.0 L1431.6,541.1 L1432.7,542.4 L1433.8,543.9 L1434.9,545.4 L1436.0,546.9 L1437.1,548.4 L1438.1,549.9 L1439.1,551.4 L1440.2,552.9 L1441.3,554.6 L1442.4,556.2 L1443.5,557.9 L1444.5,559.7 L1445.5,561.4 L1446.5,563.1 L1447.4,564.8 L1448.2,566.4 L1449.5,569.5 L1450.5,572.5 L1451.3,575.5 L1452.2,578.5 L1453.3,581.7 L1454.3,584.2 L1455.4,586.9 L1456.5,589.7 L1457.7,592.5 L1458.8,595.1 L1459.9,597.4 L1460.9,599.4 L1462.0,601.8 L1463.0,603.9 L1463.9,605.4 L1464.9,606.2 L1466.0,605.8 L1466.9,604.7 L1467.9,602.8 L1468.9,600.4 L1470.0,597.7 L1471.2,594.8 L1472.4,591.9 L1473.6,589.3 L1474.5,587.5 L1475.5,585.5 L1476.6,583.4 L1477.6,581.3 L1478.7,579.2 L1479.8,577.2 L1480.8,575.4 L1481.9,573.8 L1482.9,572.5 L1483.8,571.5 L1485.0,570.7 L1486.2,570.3 L1487.3,570.4 L1488.4,570.9 L1489.4,571.7 L1490.4,572.7 L1491.4,574.0 L1492.6,576.1 L1493.9,579.1 L1495.1,582.4 L1496.2,585.7 L1497.1,588.5 L1497.8,590.5" stroke="#f3d345" stroke-width="1.1" fill="none" stroke-linejoin="round"/></g><text x="20.9" y="490.1" font-family="Liberation Sans, sans-serif" font-size="13.2" fill="#cdcfd4" stroke="#cdcfd4" stroke-width="0.3" textLength="84.3" lengthAdjust="spacingAndGlyphs">RSI (14, close)</text><text x="114.7" y="490.1" font-family="Liberation Sans, sans-serif" font-size="13.2" fill="#7e57c2" stroke="#7e57c2" stroke-width="0.3" textLength="32.1" lengthAdjust="spacingAndGlyphs">40.97</text><text x="155.2" y="490.1" font-family="Liberation Sans, sans-serif" font-size="13.2" fill="#fdd835" stroke="#fdd835" stroke-width="0.3" textLength="32.7" lengthAdjust="spacingAndGlyphs">45.41</text><text x="1527.5" y="518.3" font-family="Liberation Sans, sans-serif" font-size="13.3" fill="#bdbdbd" stroke="#bdbdbd" stroke-width="0.3" textLength="33.1" lengthAdjust="spacingAndGlyphs">80.00</text><text x="1527.5" y="562.9" font-family="Liberation Sans, sans-serif" font-size="13.3" fill="#bdbdbd" stroke="#bdbdbd" stroke-width="0.3" textLength="33.1" lengthAdjust="spacingAndGlyphs">60.00</text><text x="1527.5" y="654.4" font-family="Liberation Sans, sans-serif" font-size="13.3" fill="#bdbdbd" stroke="#bdbdbd" stroke-width="0.3" textLength="33.1" lengthAdjust="spacingAndGlyphs">20.00</text><path d="M1518.3,573.2h47.2a2,2 0 0 1 2,2v14.3a2,2 0 0 1 -2,2h-47.2z" fill="#fdd835"/><text x="1528.6" y="587.2" font-family="Liberation Sans, sans-serif" font-size="13.8" fill="#131722" stroke="#131722" stroke-width="0.3" textLength="32.0" lengthAdjust="spacingAndGlyphs">45.41</text><path d="M1518.3,592.6h47.2a2,2 0 0 1 2,2v14.3a2,2 0 0 1 -2,2h-47.2z" fill="#7e57c2"/><text x="1528.6" y="606.6" font-family="Liberation Sans, sans-serif" font-size="13.8" fill="#ffffff" stroke="#ffffff" stroke-width="0.3" textLength="32.0" lengthAdjust="spacingAndGlyphs">40.97</text><text x="29.6" y="708.3" font-family="Liberation Sans, sans-serif" font-size="13.3" fill="#bdbdbd" stroke="#bdbdbd" stroke-width="0.3" textLength="14.3" lengthAdjust="spacingAndGlyphs">18</text><text x="114.8" y="708.3" font-family="Liberation Sans, sans-serif" font-size="13.3" fill="#bdbdbd" stroke="#bdbdbd" stroke-width="0.3" textLength="14.3" lengthAdjust="spacingAndGlyphs">20</text><text x="199.9" y="708.3" font-family="Liberation Sans, sans-serif" font-size="13.3" fill="#bdbdbd" stroke="#bdbdbd" stroke-width="0.3" textLength="14.3" lengthAdjust="spacingAndGlyphs">22</text><text x="285.2" y="708.3" font-family="Liberation Sans, sans-serif" font-size="13.3" fill="#bdbdbd" stroke="#bdbdbd" stroke-width="0.3" textLength="14.3" lengthAdjust="spacingAndGlyphs">24</text><text x="370.4" y="708.3" font-family="Liberation Sans, sans-serif" font-size="13.3" fill="#bdbdbd" stroke="#bdbdbd" stroke-width="0.3" textLength="14.3" lengthAdjust="spacingAndGlyphs">26</text><text x="455.8" y="708.3" font-family="Liberation Sans, sans-serif" font-size="13.3" fill="#bdbdbd" stroke="#bdbdbd" stroke-width="0.3" textLength="14.3" lengthAdjust="spacingAndGlyphs">28</text><text x="580.0" y="708.3" font-family="Liberation Sans, sans-serif" font-size="13.3" fill="#bdbdbd" stroke="#bdbdbd" stroke-width="0.3" textLength="22.0" lengthAdjust="spacingAndGlyphs" font-weight="bold">Oct</text><text x="672.1" y="708.3" font-family="Liberation Sans, sans-serif" font-size="13.3" fill="#bdbdbd" stroke="#bdbdbd" stroke-width="0.3" textLength="7.2" lengthAdjust="spacingAndGlyphs">3</text><text x="757.3" y="708.3" font-family="Liberation Sans, sans-serif" font-size="13.3" fill="#bdbdbd" stroke="#bdbdbd" stroke-width="0.3" textLength="7.2" lengthAdjust="spacingAndGlyphs">5</text><text x="842.5" y="708.3" font-family="Liberation Sans, sans-serif" font-size="13.3" fill="#bdbdbd" stroke="#bdbdbd" stroke-width="0.3" textLength="7.2" lengthAdjust="spacingAndGlyphs">7</text><text x="927.7" y="708.3" font-family="Liberation Sans, sans-serif" font-size="13.3" fill="#bdbdbd" stroke="#bdbdbd" stroke-width="0.3" textLength="7.2" lengthAdjust="spacingAndGlyphs">9</text><text x="1009.4" y="708.3" font-family="Liberation Sans, sans-serif" font-size="13.3" fill="#bdbdbd" stroke="#bdbdbd" stroke-width="0.3" textLength="14.3" lengthAdjust="spacingAndGlyphs">11</text><text x="1094.5" y="708.3" font-family="Liberation Sans, sans-serif" font-size="13.3" fill="#bdbdbd" stroke="#bdbdbd" stroke-width="0.3" textLength="14.3" lengthAdjust="spacingAndGlyphs">13</text><text x="1179.8" y="708.3" font-family="Liberation Sans, sans-serif" font-size="13.3" fill="#bdbdbd" stroke="#bdbdbd" stroke-width="0.3" textLength="14.3" lengthAdjust="spacingAndGlyphs">15</text><text x="1264.9" y="708.3" font-family="Liberation Sans, sans-serif" font-size="13.3" fill="#bdbdbd" stroke="#bdbdbd" stroke-width="0.3" textLength="14.3" lengthAdjust="spacingAndGlyphs">17</text><text x="1350.1" y="708.3" font-family="Liberation Sans, sans-serif" font-size="13.3" fill="#bdbdbd" stroke="#bdbdbd" stroke-width="0.3" textLength="14.3" lengthAdjust="spacingAndGlyphs">19</text><text x="1435.3" y="708.3" font-family="Liberation Sans, sans-serif" font-size="13.3" fill="#bdbdbd" stroke="#bdbdbd" stroke-width="0.3" textLength="14.3" lengthAdjust="spacingAndGlyphs">21</text><g fill="#dcdcdc"><path d="M13.1,743.8H26.9V760.7H19.4V749.4H13.1z"/><circle cx="32.8" cy="746.5" r="2.8"/><path d="M37.6,743.8H46.3L40.3,760.7H32.3z"/></g><text x="55.1" y="760.7" font-family="Liberation Sans, sans-serif" font-size="23" fill="#dcdcdc" stroke="#dcdcdc" stroke-width="0.3" textLength="135.3" lengthAdjust="spacingAndGlyphs" font-weight="bold">TradingView</text></svg>
</body></html>
